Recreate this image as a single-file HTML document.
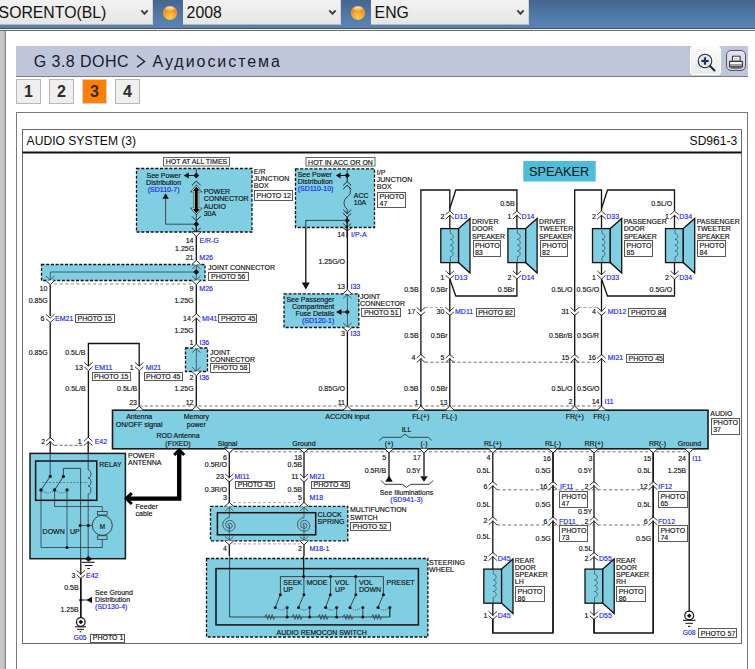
<!DOCTYPE html>
<html><head><meta charset="utf-8"><title>Audio System</title>
<style>
html,body{margin:0;padding:0;background:#fff;width:755px;height:669px;overflow:hidden;position:relative;font-family:"Liberation Sans",sans-serif;}
.topbar{position:absolute;left:0;top:0;width:755px;height:28px;background:linear-gradient(#45668f,#4f77a4 50%,#5681b1 80%,#5783b3);}
.l28{position:absolute;left:0;top:28px;width:755px;height:1px;background:#505050;}
.l29{position:absolute;left:0;top:29px;width:755px;height:1px;background:#f2f2f2;}
.l30{position:absolute;left:0;top:30px;width:755px;height:1px;background:#6c6c6c;}
.sel{position:absolute;top:-2px;height:27px;box-sizing:border-box;background:linear-gradient(#f3f3f3,#e6e6e6);border-right:1px solid #d6d2cc;border-bottom:1px solid #bdb6ae;font-size:15.8px;color:#111;line-height:26px;white-space:nowrap;overflow:hidden;}
.sel span{position:absolute;left:3.6px;top:2px;}
.chev{position:absolute;top:8px;width:9px;height:8px;}
.ball{position:absolute;top:5.5px;width:14px;height:14px;border-radius:50%;background:radial-gradient(circle at 50% 78%,#ffd060 0%,#f8a020 45%,#e07800 80%,#c86800 100%);box-shadow:inset 0 1px 0 rgba(255,240,200,.6);}
.ball:after{content:"";position:absolute;left:3px;top:1px;width:8px;height:4px;border-radius:50%;background:linear-gradient(rgba(255,255,255,.85),rgba(255,255,255,.1));}
.lbar{position:absolute;left:0;top:31px;width:5px;height:638px;background:linear-gradient(90deg,#cbcbd0,#c4c4c8 70%,#b0b0b4);}
.lbar2{position:absolute;left:5px;top:31px;width:1px;height:638px;background:#8a8a8a;}
.crumb{position:absolute;left:16px;top:46px;width:732px;height:31px;background:#c0c6da;border-bottom:1px solid #7c7c7c;box-sizing:border-box;}
.crumb .t{position:absolute;left:17.8px;top:6.5px;font-size:16px;color:#131c2e;letter-spacing:0.45px;white-space:nowrap;}
.crumb .t2{position:absolute;left:136.5px;top:6.5px;font-size:16px;color:#131c2e;letter-spacing:1.95px;white-space:nowrap;}
.zoom{position:absolute;left:690px;top:46px;width:31px;height:29px;box-sizing:border-box;border:1px solid #ffffff;border-radius:3px;background:linear-gradient(#fafafa,#ececec);}
.print{position:absolute;left:726px;top:50px;width:20px;height:21px;box-sizing:border-box;border:1.5px solid #555a66;border-radius:5px;background:linear-gradient(#e4e6ee,#c8ccd8);}
.btn{position:absolute;top:79px;width:25px;height:25px;box-sizing:border-box;border:1px solid #b8b8b8;background:#efefef;font-size:16px;font-weight:bold;color:#2b2b2b;text-align:center;line-height:24px;}
.btn.on{background:#ff7f00;border-color:#d0d0d0;}
svg.dg{position:absolute;left:0;top:0;}
svg.dg text{font-family:"Liberation Sans",sans-serif;}
</style></head>
<body>
<div class="topbar"></div>
<div class="l28"></div><div class="l29"></div><div class="l30"></div>
<div class="sel" style="left:-5px;width:158px"><span>SORENTO(BL)</span></div>
<svg class="chev" style="left:140px" width="9" height="8"><polyline points="1.3,2.4 4.5,5.8 7.7,2.4" fill="none" stroke="#444" stroke-width="2.0"/></svg>
<div class="ball" style="left:163px"></div>
<div class="sel" style="left:183px;width:158px"><span>2008</span></div>
<svg class="chev" style="left:328px" width="9" height="8"><polyline points="1.3,2.4 4.5,5.8 7.7,2.4" fill="none" stroke="#444" stroke-width="2.0"/></svg>
<div class="ball" style="left:351px"></div>
<div class="sel" style="left:371px;width:158px"><span>ENG</span></div>
<svg class="chev" style="left:516px" width="9" height="8"><polyline points="1.3,2.4 4.5,5.8 7.7,2.4" fill="none" stroke="#444" stroke-width="2.0"/></svg>
<div class="lbar"></div><div class="lbar2"></div>
<div class="crumb"><div class="t">G 3.8 DOHC</div><svg style="position:absolute;left:120px;top:9.3px" width="11" height="14"><polyline points="1,0.5 8.6,6.4 1,12.3" fill="none" stroke="#131c2e" stroke-width="1.3"/></svg><div class="t2">Аудиосистема</div></div>
<div class="zoom"><svg width="32" height="29" style="position:absolute;left:-1px;top:-1px">
<circle cx="15" cy="15" r="6.8" fill="#dce9f6" stroke="#2a2e2a" stroke-width="1.1"/>
<line x1="20" y1="20" x2="24.5" y2="24.5" stroke="#222" stroke-width="2.0" stroke-linecap="round"/>
<line x1="11.3" y1="15" x2="18.7" y2="15" stroke="#1f3552" stroke-width="2.2"/>
<line x1="15" y1="11.3" x2="15" y2="18.7" stroke="#1f3552" stroke-width="2.2"/>
</svg></div>
<div class="print"><svg width="20" height="21" style="position:absolute;left:-3px;top:-1.5px">
<rect x="8.5" y="6.2" width="7.6" height="6.4" fill="#f2f3f6" stroke="#333" stroke-width="1"/>
<line x1="10" y1="8.6" x2="14.5" y2="8.6" stroke="#999" stroke-width="0.6"/>
<line x1="10" y1="10.4" x2="14.5" y2="10.4" stroke="#999" stroke-width="0.6"/>
<path d="M5.6 12.2 q0,-0.8 0.8,-0.8 h11.2 q0.8,0 0.8,0.8 v4.6 h-12.8 z" fill="#f6f6f8" stroke="#333" stroke-width="1.1"/>
<line x1="6.2" y1="15" x2="17.8" y2="15" stroke="#333" stroke-width="0.9"/>
<line x1="6.6" y1="17.9" x2="17.4" y2="17.9" stroke="#333" stroke-width="1.1"/>
</svg></div>
<div class="btn" style="left:16px">1</div>
<div class="btn" style="left:49px">2</div>
<div class="btn on" style="left:82px">3</div>
<div class="btn" style="left:115px">4</div>

<svg class="dg" width="755" height="669" viewBox="0 0 755 669">
<rect x="16.5" y="112.5" width="731" height="600" fill="none" stroke="#7c7c7c" stroke-width="1"/>
<rect x="22.5" y="129.5" width="719" height="514" fill="none" stroke="#6a6a6a" stroke-width="1"/>
<text x="26.6" y="145.2" font-size="12.1" fill="#0c0c0c" >AUDIO SYSTEM (3)</text>
<text x="737.3" y="145.2" font-size="12.1" fill="#0c0c0c"  text-anchor="end">SD961-3</text>
<line x1="22.5" y1="152.6" x2="741.5" y2="152.6" stroke="#111" stroke-width="2.0"/>
<rect x="163.5" y="157.5" width="66" height="8.5" fill="#fff" stroke="#555" stroke-width="0.9"/>
<text x="196.5" y="164.4" font-size="7.0" fill="#111"  stroke="#111" stroke-width="0.15" text-anchor="middle">HOT AT ALL TIMES</text>
<rect x="136.5" y="168.5" width="115.5" height="63.5" fill="#80cee1" stroke="#111" stroke-width="1.3" stroke-dasharray="3 1.7"/>
<text x="163.6" y="177.9" font-size="7.0" fill="#111"  stroke="#111" stroke-width="0.15" text-anchor="middle">See Power</text>
<text x="163.6" y="184.9" font-size="7.0" fill="#111"  stroke="#111" stroke-width="0.15" text-anchor="middle">Distribution</text>
<text x="163.6" y="192.2" font-size="7.0" fill="#1a22ff"  stroke="#1a22ff" stroke-width="0.15" text-anchor="middle">(SD110-7)</text>
<line x1="196.3" y1="214" x2="196.3" y2="226" stroke="#222" stroke-width="0.8"/>
<line x1="196.3" y1="226" x2="196.3" y2="234" stroke="#111" stroke-width="1.3"/>
<polygon points="196.3,172.6 199.20000000000002,175.5 196.3,178.4 193.4,175.5" fill="#111" stroke="none" stroke-width="1"/>
<line x1="186" y1="175.5" x2="196.3" y2="175.5" stroke="#111" stroke-width="0.9"/>
<polygon points="183.6,175.5 188.8,172.4 188.8,178.6" fill="#111" stroke="none" stroke-width="1"/>
<polyline points="191.9,185.4 196.3,181 200.7,185.4" stroke="#111" stroke-width="0.9" fill="none"/>
<polygon points="196.3,186 192,191.2 194.4,191.2 194.4,208.6 192,208.6 196.3,213.8 200.6,208.6 198.2,208.6 198.2,191.2 200.6,191.2" fill="none" stroke="#333" stroke-width="1.9"/>
<polygon points="196.3,186 192,191.2 194.4,191.2 194.4,208.6 192,208.6 196.3,213.8 200.6,208.6 198.2,208.6 198.2,191.2 200.6,191.2" fill="#000" stroke="#f4f8fa" stroke-width="0.8"/>
<polyline points="191.9,216.4 196.3,220.8 200.7,216.4" stroke="#111" stroke-width="0.9" fill="none"/>
<polygon points="196.3,221.29999999999998 199.20000000000002,224.2 196.3,227.1 193.4,224.2" fill="#111" stroke="none" stroke-width="1"/>
<polyline points="196.3,224.2 165.6,224.2 165.6,196" stroke="#222" stroke-width="0.75" fill="none"/>
<polygon points="165.6,193.2 162.4,198.8 168.8,198.8" fill="#111" stroke="none" stroke-width="1"/>
<text x="203.7" y="194.3" font-size="7.0" fill="#111"  stroke="#111" stroke-width="0.15">POWER</text>
<text x="203.7" y="201.4" font-size="7.0" fill="#111"  stroke="#111" stroke-width="0.15">CONNECTOR</text>
<text x="203.7" y="208.5" font-size="7.0" fill="#111"  stroke="#111" stroke-width="0.15">AUDIO</text>
<text x="203.7" y="215.6" font-size="7.0" fill="#111"  stroke="#111" stroke-width="0.15">30A</text>
<line x1="196.3" y1="168.5" x2="196.3" y2="175.5" stroke="#333" stroke-width="0.9"/>
<text x="253.8" y="173.8" font-size="7.0" fill="#111"  stroke="#111" stroke-width="0.15">E/R</text>
<text x="253.8" y="180.8" font-size="7.0" fill="#111"  stroke="#111" stroke-width="0.15">JUNCTION</text>
<text x="253.8" y="187.8" font-size="7.0" fill="#111"  stroke="#111" stroke-width="0.15">BOX</text>
<rect x="254.5" y="190.5" width="38.0" height="10.0" fill="#fff" stroke="#5a5a5a" stroke-width="1.0"/>
<text x="256.5" y="198.3" font-size="7.0" fill="#111"  stroke="#111" stroke-width="0.15">PHOTO 12</text>
<polyline points="191.9,227.8 196.3,232.2 200.7,227.8" stroke="#111" stroke-width="0.8" fill="none"/>
<polyline points="191.6,231.8 196.3,236.5 201,231.8 191.6,231.8" stroke="#111" stroke-width="0.9" fill="#fff"/>
<text x="193.5" y="243.0" font-size="7.0" fill="#111"  stroke="#111" stroke-width="0.15" text-anchor="end">14</text>
<text x="199.5" y="243.0" font-size="7.0" fill="#1a22ff"  stroke="#1a22ff" stroke-width="0.15">E/R-G</text>
<text x="194.2" y="250.8" font-size="7.0" fill="#111"  stroke="#111" stroke-width="0.15" text-anchor="end">1.25G</text>
<text x="193.5" y="259.8" font-size="7.0" fill="#111"  stroke="#111" stroke-width="0.15" text-anchor="end">21</text>
<text x="199.3" y="259.8" font-size="7.0" fill="#1a22ff"  stroke="#1a22ff" stroke-width="0.15">M26</text>
<rect x="41.5" y="264.5" width="163.5" height="16" fill="#80cee1" stroke="#111" stroke-width="1.3" stroke-dasharray="3 1.7"/>
<line x1="196.3" y1="236" x2="196.3" y2="260.4" stroke="#111" stroke-width="1.3"/>
<line x1="50.3" y1="272" x2="196.3" y2="272" stroke="#2a4048" stroke-width="0.8"/>
<line x1="196.3" y1="264.5" x2="196.3" y2="280.5" stroke="#2a4048" stroke-width="0.75"/>
<polyline points="192.0,269.0 196.3,265.2 200.60000000000002,269.0" stroke="#333" stroke-width="0.7" fill="none"/>
<polyline points="192.0,276.0 196.3,279.8 200.60000000000002,276.0" stroke="#333" stroke-width="0.7" fill="none"/>
<line x1="50.3" y1="272" x2="50.3" y2="280.5" stroke="#2a4048" stroke-width="0.75"/>
<polyline points="46.0,276.0 50.3,279.8 54.599999999999994,276.0" stroke="#333" stroke-width="0.7" fill="none"/>
<polygon points="196.3,269.1 199.20000000000002,272 196.3,274.9 193.4,272" fill="#111" stroke="none" stroke-width="1"/>
<line x1="54" y1="284" x2="192" y2="284" stroke="#b0b0b0" stroke-width="1.3" stroke-dasharray="3 2.6"/>
<text x="208" y="269.9" font-size="7.0" fill="#111"  stroke="#111" stroke-width="0.15">JOINT CONNECTOR</text>
<rect x="208.5" y="272.5" width="40.0" height="8.0" fill="#fff" stroke="#5a5a5a" stroke-width="1.0"/>
<text x="211.0" y="279.3" font-size="7.0" fill="#111"  stroke="#111" stroke-width="0.15">PHOTO 56</text>
<text x="47.3" y="291.4" font-size="7.0" fill="#111"  stroke="#111" stroke-width="0.15" text-anchor="end">10</text>
<text x="193.5" y="291.4" font-size="7.0" fill="#111"  stroke="#111" stroke-width="0.15" text-anchor="end">9</text>
<text x="199.3" y="291.4" font-size="7.0" fill="#1a22ff"  stroke="#1a22ff" stroke-width="0.15">M26</text>
<line x1="50.2" y1="284.5" x2="50.2" y2="316" stroke="#111" stroke-width="1.3"/>
<line x1="196.3" y1="284.5" x2="196.3" y2="314" stroke="#111" stroke-width="1.3"/>
<text x="47.8" y="303.4" font-size="7.0" fill="#111"  stroke="#111" stroke-width="0.15" text-anchor="end">0.85G</text>
<text x="193.5" y="303.4" font-size="7.0" fill="#111"  stroke="#111" stroke-width="0.15" text-anchor="end">1.25G</text>
<text x="44.3" y="320.9" font-size="7.0" fill="#111"  stroke="#111" stroke-width="0.15" text-anchor="end">6</text>
<text x="55" y="320.9" font-size="7.0" fill="#1a22ff"  stroke="#1a22ff" stroke-width="0.15">EM21</text>
<rect x="75.5" y="314.5" width="39.0" height="8.0" fill="#fff" stroke="#5a5a5a" stroke-width="1.0"/>
<text x="77.5" y="320.8" font-size="7.0" fill="#111"  stroke="#111" stroke-width="0.15">PHOTO 15</text>
<text x="190.8" y="320.9" font-size="7.0" fill="#111"  stroke="#111" stroke-width="0.15" text-anchor="end">14</text>
<text x="201.9" y="320.9" font-size="7.0" fill="#1a22ff"  stroke="#1a22ff" stroke-width="0.15">MI41</text>
<rect x="218.5" y="314.5" width="38.0" height="8.0" fill="#fff" stroke="#5a5a5a" stroke-width="1.0"/>
<text x="221.0" y="320.8" font-size="7.0" fill="#111"  stroke="#111" stroke-width="0.15">PHOTO 45</text>
<line x1="50.2" y1="322.5" x2="50.2" y2="453.4" stroke="#111" stroke-width="1.3"/>
<line x1="196.3" y1="317.5" x2="196.3" y2="344" stroke="#111" stroke-width="1.3"/>
<text x="193.5" y="333.2" font-size="7.0" fill="#111"  stroke="#111" stroke-width="0.15" text-anchor="end">1.25G</text>
<text x="47.8" y="354.6" font-size="7.0" fill="#111"  stroke="#111" stroke-width="0.15" text-anchor="end">0.85G</text>
<text x="193.5" y="345.1" font-size="7.0" fill="#111"  stroke="#111" stroke-width="0.15" text-anchor="end">1</text>
<text x="199.5" y="345.1" font-size="7.0" fill="#1a22ff"  stroke="#1a22ff" stroke-width="0.15">I36</text>
<rect x="185.5" y="348" width="22" height="23.5" fill="#80cee1" stroke="#111" stroke-width="1.3" stroke-dasharray="3 1.7"/>
<line x1="196.3" y1="346" x2="196.3" y2="343.8" stroke="#111" stroke-width="1.3"/>
<line x1="196.3" y1="348.2" x2="196.3" y2="371.6" stroke="#2a4048" stroke-width="0.75"/>
<polyline points="192.0,352.7 196.3,348.9 200.60000000000002,352.7" stroke="#333" stroke-width="0.7" fill="none"/>
<polyline points="192.0,367.1 196.3,370.90000000000003 200.60000000000002,367.1" stroke="#333" stroke-width="0.7" fill="none"/>
<line x1="196.3" y1="375.7" x2="196.3" y2="410" stroke="#111" stroke-width="1.3"/>
<text x="210" y="354.6" font-size="7.0" fill="#111"  stroke="#111" stroke-width="0.15">JOINT</text>
<text x="210" y="361.8" font-size="7.0" fill="#111"  stroke="#111" stroke-width="0.15">CONNECTOR</text>
<rect x="210.5" y="363.5" width="39.0" height="9.0" fill="#fff" stroke="#5a5a5a" stroke-width="1.0"/>
<text x="213.0" y="370.3" font-size="7.0" fill="#111"  stroke="#111" stroke-width="0.15">PHOTO 58</text>
<text x="193.5" y="379.7" font-size="7.0" fill="#111"  stroke="#111" stroke-width="0.15" text-anchor="end">2</text>
<text x="199.5" y="379.7" font-size="7.0" fill="#1a22ff"  stroke="#1a22ff" stroke-width="0.15">I36</text>
<text x="193.6" y="391.4" font-size="7.0" fill="#111"  stroke="#111" stroke-width="0.15" text-anchor="end">1.25G</text>
<text x="193.5" y="404.9" font-size="7.0" fill="#111"  stroke="#111" stroke-width="0.15" text-anchor="end">12</text>
<polyline points="88.4,366 88.4,343.5 139.2,343.5 139.2,366" stroke="#111" stroke-width="1.3" fill="none"/>
<text x="85.5" y="354.6" font-size="7.0" fill="#111"  stroke="#111" stroke-width="0.15" text-anchor="end">0.5L/B</text>
<text x="82.9" y="369.6" font-size="7.0" fill="#111"  stroke="#111" stroke-width="0.15" text-anchor="end">13</text>
<text x="94.6" y="369.6" font-size="7.0" fill="#1a22ff"  stroke="#1a22ff" stroke-width="0.15">EM11</text>
<text x="133.7" y="369.6" font-size="7.0" fill="#111"  stroke="#111" stroke-width="0.15" text-anchor="end">1</text>
<text x="145.7" y="369.6" font-size="7.0" fill="#1a22ff"  stroke="#1a22ff" stroke-width="0.15">MI21</text>
<rect x="92.5" y="372.5" width="38.0" height="8.0" fill="#fff" stroke="#5a5a5a" stroke-width="1.0"/>
<text x="94.0" y="378.8" font-size="7.0" fill="#111"  stroke="#111" stroke-width="0.15">PHOTO 15</text>
<rect x="144.5" y="372.5" width="38.0" height="8.0" fill="#fff" stroke="#5a5a5a" stroke-width="1.0"/>
<text x="146.0" y="378.8" font-size="7.0" fill="#111"  stroke="#111" stroke-width="0.15">PHOTO 45</text>
<line x1="88.4" y1="370.5" x2="88.4" y2="438" stroke="#111" stroke-width="1.3"/>
<line x1="139.2" y1="370.5" x2="139.2" y2="410" stroke="#111" stroke-width="1.3"/>
<text x="85.6" y="391.4" font-size="7.0" fill="#111"  stroke="#111" stroke-width="0.15" text-anchor="end">0.5L/B</text>
<text x="137.3" y="391.4" font-size="7.0" fill="#111"  stroke="#111" stroke-width="0.15" text-anchor="end">0.5L/B</text>
<text x="137" y="404.9" font-size="7.0" fill="#111"  stroke="#111" stroke-width="0.15" text-anchor="end">23</text>
<line x1="139.2" y1="406" x2="601.5" y2="406" stroke="#606060" stroke-width="0.9" stroke-dasharray="3 2.4"/>
<rect x="112.5" y="410.2" width="595.5" height="38.6" fill="#80cee1" stroke="#1a1a1a" stroke-width="1.6"/>
<text x="139.2" y="419.3" font-size="7.0" fill="#111"  stroke="#111" stroke-width="0.15" text-anchor="middle">Antenna</text>
<text x="139.2" y="426.5" font-size="7.0" fill="#111"  stroke="#111" stroke-width="0.15" text-anchor="middle">ON/OFF signal</text>
<text x="196.3" y="419.3" font-size="7.0" fill="#111"  stroke="#111" stroke-width="0.15" text-anchor="middle">Memory</text>
<text x="196.3" y="426.5" font-size="7.0" fill="#111"  stroke="#111" stroke-width="0.15" text-anchor="middle">power</text>
<text x="178" y="438.4" font-size="7.0" fill="#111"  stroke="#111" stroke-width="0.15" text-anchor="middle">ROD Antenna</text>
<text x="178" y="446.3" font-size="7.0" fill="#111"  stroke="#111" stroke-width="0.15" text-anchor="middle">(FIXED)</text>
<text x="347.4" y="419.3" font-size="7.0" fill="#111"  stroke="#111" stroke-width="0.15" text-anchor="middle">ACC/ON input</text>
<text x="420.8" y="419.3" font-size="7.0" fill="#111"  stroke="#111" stroke-width="0.15" text-anchor="middle">FL(+)</text>
<text x="449.4" y="419.3" font-size="7.0" fill="#111"  stroke="#111" stroke-width="0.15" text-anchor="middle">FL(-)</text>
<text x="574.7" y="419.3" font-size="7.0" fill="#111"  stroke="#111" stroke-width="0.15" text-anchor="middle">FR(+)</text>
<text x="601.5" y="419.3" font-size="7.0" fill="#111"  stroke="#111" stroke-width="0.15" text-anchor="middle">FR(-)</text>
<text x="406.5" y="432.4" font-size="7.0" fill="#111"  stroke="#111" stroke-width="0.15" text-anchor="middle">ILL</text>
<polyline points="379.2,440.6 382.6,437.3 400.8,437.3 404.9,434.2 409.3,437.3 428.5,437.3 431.8,440.6" stroke="#222" stroke-width="0.8" fill="none"/>
<text x="227.6" y="445.5" font-size="7.0" fill="#111"  stroke="#111" stroke-width="0.15" text-anchor="middle">Signal</text>
<text x="304" y="445.5" font-size="7.0" fill="#111"  stroke="#111" stroke-width="0.15" text-anchor="middle">Ground</text>
<text x="389" y="445.5" font-size="7.0" fill="#111"  stroke="#111" stroke-width="0.15" text-anchor="middle">(+)</text>
<text x="424" y="445.5" font-size="7.0" fill="#111"  stroke="#111" stroke-width="0.15" text-anchor="middle">(-)</text>
<text x="492.8" y="445.5" font-size="7.0" fill="#111"  stroke="#111" stroke-width="0.15" text-anchor="middle">RL(+)</text>
<text x="553" y="445.5" font-size="7.0" fill="#111"  stroke="#111" stroke-width="0.15" text-anchor="middle">RL(-)</text>
<text x="594" y="445.5" font-size="7.0" fill="#111"  stroke="#111" stroke-width="0.15" text-anchor="middle">RR(+)</text>
<text x="657.5" y="445.5" font-size="7.0" fill="#111"  stroke="#111" stroke-width="0.15" text-anchor="middle">RR(-)</text>
<text x="689.4" y="445.5" font-size="7.0" fill="#111"  stroke="#111" stroke-width="0.15" text-anchor="middle">Ground</text>
<line x1="229.3" y1="451.8" x2="689.2" y2="451.8" stroke="#606060" stroke-width="0.9" stroke-dasharray="3 2.4"/>
<text x="710.3" y="416.0" font-size="7.0" fill="#111"  stroke="#111" stroke-width="0.15">AUDIO</text>
<rect x="711.5" y="418.5" width="28.0" height="16.0" fill="#fff" stroke="#5a5a5a" stroke-width="1.0"/>
<text x="713.2" y="425.2" font-size="7.0" fill="#111"  stroke="#111" stroke-width="0.15">PHOTO</text>
<text x="713.2" y="432.4" font-size="7.0" fill="#111"  stroke="#111" stroke-width="0.15">37</text>
<text x="345" y="391.4" font-size="7.0" fill="#111"  stroke="#111" stroke-width="0.15" text-anchor="end">0.85G/O</text>
<text x="345" y="404.9" font-size="7.0" fill="#111"  stroke="#111" stroke-width="0.15" text-anchor="end">11</text>
<text x="45.2" y="444.1" font-size="7.0" fill="#111"  stroke="#111" stroke-width="0.15" text-anchor="end">2</text>
<text x="81.7" y="444.1" font-size="7.0" fill="#111"  stroke="#111" stroke-width="0.15" text-anchor="end">1</text>
<text x="94.7" y="444.1" font-size="7.0" fill="#1a22ff"  stroke="#1a22ff" stroke-width="0.15">E42</text>
<line x1="88.2" y1="440.8" x2="88.2" y2="453.4" stroke="#111" stroke-width="1.3"/>
<line x1="54.5" y1="445.3" x2="84" y2="445.3" stroke="#555" stroke-width="0.9" stroke-dasharray="3 2"/>
<rect x="30" y="453.4" width="95.4" height="105.3" fill="#80cee1" stroke="#1a1a1a" stroke-width="1.5"/>
<rect x="35.6" y="461" width="61.2" height="39.3" fill="none" stroke="#111" stroke-width="1.5"/>
<text x="99.2" y="466.7" font-size="7.0" fill="#111"  stroke="#111" stroke-width="0.15">RELAY</text>
<text x="128" y="457.9" font-size="7.0" fill="#111"  stroke="#111" stroke-width="0.15">POWER</text>
<text x="128" y="465.0" font-size="7.0" fill="#111"  stroke="#111" stroke-width="0.15">ANTENNA</text>
<line x1="50.2" y1="453.4" x2="50.2" y2="476.4" stroke="#222" stroke-width="0.75"/>
<circle cx="50.2" cy="476.4" r="1.6" fill="#111"/>
<circle cx="63.4" cy="476.4" r="1.6" fill="#111"/>
<line x1="50.2" y1="476.4" x2="41" y2="490" stroke="#222" stroke-width="0.8"/>
<line x1="63.4" y1="476.4" x2="54.6" y2="490" stroke="#222" stroke-width="0.8"/>
<circle cx="41" cy="490" r="1.7" fill="#111"/>
<circle cx="54.6" cy="490" r="1.7" fill="#111"/>
<circle cx="67" cy="490" r="1.7" fill="#111"/>
<line x1="42" y1="482.5" x2="88" y2="482.5" stroke="#444" stroke-width="0.6" stroke-dasharray="2 1.5"/>
<path d="M43,491 q5,4 10,0 M56.5,491 q5,4 10,0" fill="none" stroke="#333" stroke-width="0.6" stroke-dasharray="1.5 1"/>
<polyline points="63.4,476.4 63.4,468.4 80.6,468.4 80.6,559" stroke="#222" stroke-width="0.75" fill="none"/>
<line x1="80.8" y1="559" x2="80.8" y2="624" stroke="#111" stroke-width="1.3"/>
<line x1="88.2" y1="453.4" x2="88.2" y2="470" stroke="#222" stroke-width="0.75"/>
<path d="M88.2,470 c3.6,0 3.6,8 0,8 c3.6,0 3.6,8 0,8 c3.6,0 3.6,8 0,8 L88.2,559" fill="none" stroke="#222" stroke-width="0.7"/>
<polyline points="41,490 41,547.5 102.3,547.5 102.3,536" stroke="#222" stroke-width="0.7" fill="none"/>
<polyline points="54.6,490 54.6,506.5 102.3,506.5 102.3,515" stroke="#222" stroke-width="0.7" fill="none"/>
<polyline points="67,490 67,547.5" stroke="#222" stroke-width="0.7" fill="none"/>
<circle cx="67" cy="547.5" r="1.5" fill="#111"/>
<circle cx="102.3" cy="525.4" r="10" fill="none" stroke="#222" stroke-width="0.8"/>
<rect x="97.5" y="511.5" width="9.6" height="3.5" fill="#80cee1" stroke="#222" stroke-width="0.7"/>
<rect x="97.5" y="535.8" width="9.6" height="3.5" fill="#80cee1" stroke="#222" stroke-width="0.7"/>
<text x="102.3" y="528.9" font-size="6.4" fill="#111"  stroke="#111" stroke-width="0.15" text-anchor="middle">M</text>
<line x1="80.1" y1="525.4" x2="92.3" y2="525.4" stroke="#222" stroke-width="0.7"/>
<circle cx="80.1" cy="525.4" r="1.5" fill="#111"/>
<circle cx="88.4" cy="525.4" r="1.5" fill="#111"/>
<text x="42.6" y="534.4" font-size="7.0" fill="#111"  stroke="#111" stroke-width="0.15">DOWN</text>
<text x="70" y="534.4" font-size="7.0" fill="#111"  stroke="#111" stroke-width="0.15">UP</text>
<polygon points="88.5,555.8 92,558.9 88.5,561.8 85,558.9" fill="#111" stroke="none" stroke-width="1"/>
<line x1="82" y1="562.3" x2="94.5" y2="562.3" stroke="#111" stroke-width="1.1"/>
<line x1="85" y1="565.5" x2="92.3" y2="565.5" stroke="#111" stroke-width="1.0"/>
<line x1="87.4" y1="568.6" x2="89.8" y2="568.6" stroke="#111" stroke-width="1.0"/>
<polyline points="179.2,451 179.2,498.6 127,498.6" stroke="#000" stroke-width="4.4" fill="none" stroke-linejoin="miter"/>
<polyline points="131.8,493.2 126.2,498.6 131.8,504" stroke="#000" stroke-width="3.0" fill="none" stroke-linejoin="miter" stroke-miterlimit="6"/>
<polyline points="174.2,455 179.2,449.8 184.2,455" stroke="#000" stroke-width="3.0" fill="none" stroke-linejoin="miter" stroke-miterlimit="6"/>
<text x="135.6" y="508.9" font-size="7.0" fill="#111"  stroke="#111" stroke-width="0.15">Feeder</text>
<text x="135.6" y="516.0" font-size="7.0" fill="#111"  stroke="#111" stroke-width="0.15">cable</text>
<text x="75.3" y="578.1" font-size="7.0" fill="#111"  stroke="#111" stroke-width="0.15" text-anchor="end">3</text>
<text x="86" y="578.1" font-size="7.0" fill="#1a22ff"  stroke="#1a22ff" stroke-width="0.15">E42</text>
<line x1="80.8" y1="578.5" x2="80.8" y2="618" stroke="#111" stroke-width="1.3"/>
<text x="78.6" y="589.8" font-size="7.0" fill="#111"  stroke="#111" stroke-width="0.15" text-anchor="end">0.5B</text>
<circle cx="80.8" cy="600" r="1.6" fill="#111"/>
<line x1="80.8" y1="600" x2="90" y2="600" stroke="#111" stroke-width="0.9"/>
<polygon points="86.5,600 92,596.8 92,603.2" fill="#111" stroke="none" stroke-width="1"/>
<text x="95.1" y="595.4" font-size="7.0" fill="#111"  stroke="#111" stroke-width="0.15">See Ground</text>
<text x="95.1" y="602.3" font-size="7.0" fill="#111"  stroke="#111" stroke-width="0.15">Distribution</text>
<text x="95.1" y="609.2" font-size="7.0" fill="#1a22ff"  stroke="#1a22ff" stroke-width="0.15">(SD130-4)</text>
<text x="78.8" y="612.2" font-size="7.0" fill="#111"  stroke="#111" stroke-width="0.15" text-anchor="end">1.25B</text>
<circle cx="80.8" cy="622" r="4.3" fill="#fff" stroke="#111" stroke-width="1.2"/>
<polygon points="80.8,619.7 83.1,622 80.8,624.3 78.5,622" fill="#111" stroke="none" stroke-width="1"/>
<line x1="75" y1="626.8" x2="86" y2="626.8" stroke="#111" stroke-width="1.1"/>
<line x1="77" y1="629.3" x2="84" y2="629.3" stroke="#111" stroke-width="1.0"/>
<line x1="79.6" y1="631.8" x2="81.4" y2="631.8" stroke="#111" stroke-width="1.0"/>
<text x="73.6" y="639.6" font-size="6.8" fill="#1a22ff"  stroke="#1a22ff" stroke-width="0.15">G05</text>
<rect x="90.5" y="634.5" width="34.0" height="8.0" fill="#fff" stroke="#5a5a5a" stroke-width="1.0"/>
<text x="92.8" y="640.3" font-size="7.0" fill="#111"  stroke="#111" stroke-width="0.15">PHOTO 1</text>
<rect x="306" y="157.5" width="69" height="8.5" fill="#fff" stroke="#555" stroke-width="0.9"/>
<text x="340.5" y="164.5" font-size="7.0" fill="#111"  stroke="#111" stroke-width="0.15" text-anchor="middle">HOT IN ACC OR ON</text>
<rect x="295.5" y="168.8" width="79" height="58.7" fill="#80cee1" stroke="#111" stroke-width="1.3" stroke-dasharray="3 1.7"/>
<line x1="347.2" y1="169.2" x2="347.2" y2="175.5" stroke="#333" stroke-width="0.9"/>
<text x="297.7" y="176.9" font-size="7.0" fill="#111"  stroke="#111" stroke-width="0.15">See Power</text>
<text x="297.7" y="183.8" font-size="7.0" fill="#111"  stroke="#111" stroke-width="0.15">Distribution</text>
<text x="297.7" y="191.0" font-size="7.0" fill="#1a22ff"  stroke="#1a22ff" stroke-width="0.15">(SD110-10)</text>
<line x1="347.2" y1="175.5" x2="347.2" y2="181.5" stroke="#111" stroke-width="1.0"/>
<polygon points="347.2,172.8 349.9,175.5 347.2,178.2 344.5,175.5" fill="#111" stroke="none" stroke-width="1"/>
<line x1="338" y1="175.5" x2="347.2" y2="175.5" stroke="#111" stroke-width="1.0"/>
<polygon points="335.9,175.5 340.6,172.6 340.6,178.4" fill="#111" stroke="none" stroke-width="1"/>
<polyline points="343.2,185.4 347.2,181.6 351.2,185.4" stroke="#111" stroke-width="0.9" fill="none"/>
<polyline points="343.2,189 347.2,185.2 351.2,189" stroke="#111" stroke-width="0.9" fill="none"/>
<path d="M347.2,185.5 C351.5,188 351.5,194.5 347.2,197 C343,199.5 343,206.5 347.2,209 L347.2,214" fill="none" stroke="#222" stroke-width="0.8"/>
<polyline points="343.2,209.7 347.2,213.5 351.2,209.7" stroke="#111" stroke-width="0.9" fill="none"/>
<polyline points="343.2,213.3 347.2,217.1 351.2,213.3" stroke="#111" stroke-width="0.9" fill="none"/>
<text x="353.8" y="197.8" font-size="7.0" fill="#111"  stroke="#111" stroke-width="0.15">ACC</text>
<text x="353.8" y="204.9" font-size="7.0" fill="#111"  stroke="#111" stroke-width="0.15">10A</text>
<line x1="347.2" y1="217" x2="347.2" y2="238" stroke="#111" stroke-width="1.3"/>
<polygon points="347.2,217.70000000000002 349.9,220.4 347.2,223.1 344.5,220.4" fill="#111" stroke="none" stroke-width="1"/>
<line x1="305.8" y1="220.4" x2="347.2" y2="220.4" stroke="#222" stroke-width="0.8"/>
<line x1="305.8" y1="220" x2="305.8" y2="227.5" stroke="#222" stroke-width="0.8"/>
<line x1="305.8" y1="227.5" x2="305.8" y2="284" stroke="#111" stroke-width="1.3"/>
<polygon points="305.8,289.5 301.8,282.5 309.8,282.5" fill="#111" stroke="none" stroke-width="1"/>
<polyline points="343.2,223.5 347.2,227.2 351.2,223.5" stroke="#111" stroke-width="0.8" fill="none"/>
<polyline points="342.5,227.5 347.2,230.8 351.9,227.5" stroke="#111" stroke-width="0.9" fill="none"/>
<text x="376.8" y="174.7" font-size="7.0" fill="#111"  stroke="#111" stroke-width="0.15">I/P</text>
<text x="376.8" y="181.7" font-size="7.0" fill="#111"  stroke="#111" stroke-width="0.15">JUNCTION</text>
<text x="376.8" y="188.7" font-size="7.0" fill="#111"  stroke="#111" stroke-width="0.15">BOX</text>
<rect x="377.5" y="192.5" width="28.0" height="15.0" fill="#fff" stroke="#5a5a5a" stroke-width="1.0"/>
<text x="379.5" y="198.9" font-size="7.0" fill="#111"  stroke="#111" stroke-width="0.15">PHOTO</text>
<text x="379.5" y="206.1" font-size="7.0" fill="#111"  stroke="#111" stroke-width="0.15">47</text>
<text x="345" y="236.5" font-size="7.0" fill="#111"  stroke="#111" stroke-width="0.15" text-anchor="end">14</text>
<text x="351" y="236.5" font-size="7.0" fill="#1a22ff"  stroke="#1a22ff" stroke-width="0.15">I/P-A</text>
<line x1="347.4" y1="228" x2="347.4" y2="289.7" stroke="#111" stroke-width="1.3"/>
<line x1="347.4" y1="331.6" x2="347.4" y2="410" stroke="#111" stroke-width="1.3"/>
<text x="345" y="264.0" font-size="7.0" fill="#111"  stroke="#111" stroke-width="0.15" text-anchor="end">1.25G/O</text>
<text x="345" y="289.0" font-size="7.0" fill="#111"  stroke="#111" stroke-width="0.15" text-anchor="end">13</text>
<text x="350.5" y="289.0" font-size="7.0" fill="#1a22ff"  stroke="#1a22ff" stroke-width="0.15">I33</text>
<rect x="284" y="293.8" width="74.8" height="33.7" fill="#80cee1" stroke="#111" stroke-width="1.3" stroke-dasharray="3 1.7"/>
<line x1="347.4" y1="293.8" x2="347.4" y2="327.5" stroke="#2a4048" stroke-width="0.75"/>
<polyline points="343.09999999999997,298.3 347.4,294.5 351.7,298.3" stroke="#333" stroke-width="0.7" fill="none"/>
<polyline points="343.09999999999997,323.0 347.4,326.8 351.7,323.0" stroke="#333" stroke-width="0.7" fill="none"/>
<text x="334.3" y="301.7" font-size="7.0" fill="#111"  stroke="#111" stroke-width="0.15" text-anchor="end">See Passenger</text>
<text x="334.3" y="308.7" font-size="7.0" fill="#111"  stroke="#111" stroke-width="0.15" text-anchor="end">Compartment</text>
<text x="334.3" y="315.7" font-size="7.0" fill="#111"  stroke="#111" stroke-width="0.15" text-anchor="end">Fuse Details</text>
<text x="334.3" y="322.7" font-size="7.0" fill="#1a22ff"  stroke="#1a22ff" stroke-width="0.15" text-anchor="end">(SD120-1)</text>
<polygon points="347.4,309.4 350.0,312 347.4,314.6 344.79999999999995,312" fill="#111" stroke="none" stroke-width="1"/>
<line x1="340" y1="312" x2="347.4" y2="312" stroke="#111" stroke-width="1.0"/>
<polygon points="336,312 341.5,309.1 341.5,314.9" fill="#111" stroke="none" stroke-width="1"/>
<text x="345" y="335.5" font-size="7.0" fill="#111"  stroke="#111" stroke-width="0.15" text-anchor="end">3</text>
<text x="350.5" y="335.5" font-size="7.0" fill="#1a22ff"  stroke="#1a22ff" stroke-width="0.15">I33</text>
<text x="360" y="299.3" font-size="7.0" fill="#111"  stroke="#111" stroke-width="0.15">JOINT</text>
<text x="360" y="306.1" font-size="7.0" fill="#111"  stroke="#111" stroke-width="0.15">CONNECTOR</text>
<rect x="361.5" y="308.5" width="39.0" height="8.0" fill="#fff" stroke="#5a5a5a" stroke-width="1.0"/>
<text x="363.9" y="315.1" font-size="7.0" fill="#111"  stroke="#111" stroke-width="0.15">PHOTO 51</text>
<rect x="523.3" y="161" width="72.4" height="20.5" fill="#4dbddb" stroke="none" stroke-width="0"/>
<text x="528.9" y="176.0" font-size="13.6" fill="#111"  textLength="60.4" lengthAdjust="spacingAndGlyphs">SPEAKER</text>
<polyline points="420.9,410 420.9,190 449.8,190 449.8,211" stroke="#111" stroke-width="1.3" fill="none"/>
<polyline points="516.9,211 516.9,190 455.8,190 449.8,208.5" stroke="#111" stroke-width="1.3" fill="none"/>
<rect x="440.8" y="228.6" width="17.80000000000001" height="34.00000000000003" fill="#80cee1" stroke="#111" stroke-width="1.3"/>
<polygon points="458.6,228.6 470.0,218.4 470.0,273.0 458.6,262.6" fill="#80cee1" stroke="#111" stroke-width="1.3"/>
<path d="M450.3,228.6 L450.3,233.6 c3.8,0.3 3.8,5.5 0,5.8 c3.8,0.3 3.8,5.5 0,5.8 c3.8,0.3 3.8,5.5 0,5.8 c3.8,0.3 3.8,5.5 0,5.8 L450.3,262.6" fill="none" stroke="#3a4a50" stroke-width="0.7"/>
<rect x="507.9" y="228.6" width="17.799999999999955" height="34.00000000000003" fill="#80cee1" stroke="#111" stroke-width="1.3"/>
<polygon points="525.6999999999999,228.6 537.1,218.4 537.1,273.0 525.6999999999999,262.6" fill="#80cee1" stroke="#111" stroke-width="1.3"/>
<path d="M517.4,228.6 L517.4,233.6 c3.8,0.3 3.8,5.5 0,5.8 c3.8,0.3 3.8,5.5 0,5.8 c3.8,0.3 3.8,5.5 0,5.8 c3.8,0.3 3.8,5.5 0,5.8 L517.4,262.6" fill="none" stroke="#3a4a50" stroke-width="0.7"/>
<line x1="449.8" y1="214.6" x2="449.8" y2="228.6" stroke="#111" stroke-width="1.3"/>
<line x1="516.9" y1="214.6" x2="516.9" y2="228.6" stroke="#111" stroke-width="1.3"/>
<line x1="449.8" y1="262.6" x2="449.8" y2="275" stroke="#111" stroke-width="1.3"/>
<line x1="516.9" y1="262.6" x2="516.9" y2="275" stroke="#111" stroke-width="1.3"/>
<polyline points="449.8,279 455.8,296 516.9,296 516.9,279" stroke="#111" stroke-width="1.3" fill="none"/>
<line x1="449.8" y1="279" x2="449.8" y2="410" stroke="#111" stroke-width="1.3"/>
<text x="444.3" y="218.7" font-size="7.0" fill="#111"  stroke="#111" stroke-width="0.15" text-anchor="end">2</text>
<text x="454.5" y="218.7" font-size="7.0" fill="#1a22ff"  stroke="#1a22ff" stroke-width="0.15">D13</text>
<text x="511.4" y="218.7" font-size="7.0" fill="#111"  stroke="#111" stroke-width="0.15" text-anchor="end">1</text>
<text x="521.6" y="218.7" font-size="7.0" fill="#1a22ff"  stroke="#1a22ff" stroke-width="0.15">D14</text>
<text x="444.3" y="279.9" font-size="7.0" fill="#111"  stroke="#111" stroke-width="0.15" text-anchor="end">1</text>
<text x="454.5" y="279.9" font-size="7.0" fill="#1a22ff"  stroke="#1a22ff" stroke-width="0.15">D13</text>
<text x="511.4" y="279.9" font-size="7.0" fill="#111"  stroke="#111" stroke-width="0.15" text-anchor="end">2</text>
<text x="521.6" y="279.9" font-size="7.0" fill="#1a22ff"  stroke="#1a22ff" stroke-width="0.15">D14</text>
<text x="472.0" y="224.1" font-size="7.0" fill="#111"  stroke="#111" stroke-width="0.15">DRIVER</text>
<text x="472.0" y="231.3" font-size="7.0" fill="#111"  stroke="#111" stroke-width="0.15">DOOR</text>
<text x="472.0" y="238.5" font-size="7.0" fill="#111"  stroke="#111" stroke-width="0.15">SPEAKER</text>
<text x="539.1" y="224.1" font-size="7.0" fill="#111"  stroke="#111" stroke-width="0.15">DRIVER</text>
<text x="539.1" y="231.3" font-size="7.0" fill="#111"  stroke="#111" stroke-width="0.15">TWEETER</text>
<text x="539.1" y="238.5" font-size="7.0" fill="#111"  stroke="#111" stroke-width="0.15">SPEAKER</text>
<rect x="473.5" y="240.5" width="27.0" height="16.0" fill="#fff" stroke="#5a5a5a" stroke-width="1.0"/>
<text x="474.9" y="247.5" font-size="7.0" fill="#111"  stroke="#111" stroke-width="0.15">PHOTO</text>
<text x="474.9" y="254.7" font-size="7.0" fill="#111"  stroke="#111" stroke-width="0.15">83</text>
<rect x="540.5" y="240.5" width="27.0" height="16.0" fill="#fff" stroke="#5a5a5a" stroke-width="1.0"/>
<text x="542.0" y="247.5" font-size="7.0" fill="#111"  stroke="#111" stroke-width="0.15">PHOTO</text>
<text x="542.0" y="254.7" font-size="7.0" fill="#111"  stroke="#111" stroke-width="0.15">82</text>
<text x="514.6" y="205.9" font-size="7.0" fill="#111"  stroke="#111" stroke-width="0.15" text-anchor="end">0.5B</text>
<text x="514.6" y="292.1" font-size="7.0" fill="#111"  stroke="#111" stroke-width="0.15" text-anchor="end">0.5Br</text>
<polyline points="574.7,410 574.7,190 601.5,190 601.5,211" stroke="#111" stroke-width="1.3" fill="none"/>
<polyline points="674.5,211 674.5,190 607.5,190 601.5,208.5" stroke="#111" stroke-width="1.3" fill="none"/>
<rect x="592.5" y="228.6" width="17.799999999999955" height="34.00000000000003" fill="#80cee1" stroke="#111" stroke-width="1.3"/>
<polygon points="610.3,228.6 621.7,218.4 621.7,273.0 610.3,262.6" fill="#80cee1" stroke="#111" stroke-width="1.3"/>
<path d="M602.0,228.6 L602.0,233.6 c3.8,0.3 3.8,5.5 0,5.8 c3.8,0.3 3.8,5.5 0,5.8 c3.8,0.3 3.8,5.5 0,5.8 c3.8,0.3 3.8,5.5 0,5.8 L602.0,262.6" fill="none" stroke="#3a4a50" stroke-width="0.7"/>
<rect x="665.5" y="228.6" width="17.799999999999955" height="34.00000000000003" fill="#80cee1" stroke="#111" stroke-width="1.3"/>
<polygon points="683.3,228.6 694.7,218.4 694.7,273.0 683.3,262.6" fill="#80cee1" stroke="#111" stroke-width="1.3"/>
<path d="M675.0,228.6 L675.0,233.6 c3.8,0.3 3.8,5.5 0,5.8 c3.8,0.3 3.8,5.5 0,5.8 c3.8,0.3 3.8,5.5 0,5.8 c3.8,0.3 3.8,5.5 0,5.8 L675.0,262.6" fill="none" stroke="#3a4a50" stroke-width="0.7"/>
<line x1="601.5" y1="214.6" x2="601.5" y2="228.6" stroke="#111" stroke-width="1.3"/>
<line x1="674.5" y1="214.6" x2="674.5" y2="228.6" stroke="#111" stroke-width="1.3"/>
<line x1="601.5" y1="262.6" x2="601.5" y2="275" stroke="#111" stroke-width="1.3"/>
<line x1="674.5" y1="262.6" x2="674.5" y2="275" stroke="#111" stroke-width="1.3"/>
<polyline points="601.5,279 607.5,296 674.5,296 674.5,279" stroke="#111" stroke-width="1.3" fill="none"/>
<line x1="601.5" y1="279" x2="601.5" y2="410" stroke="#111" stroke-width="1.3"/>
<text x="596.0" y="218.7" font-size="7.0" fill="#111"  stroke="#111" stroke-width="0.15" text-anchor="end">2</text>
<text x="606.2" y="218.7" font-size="7.0" fill="#1a22ff"  stroke="#1a22ff" stroke-width="0.15">D33</text>
<text x="669.0" y="218.7" font-size="7.0" fill="#111"  stroke="#111" stroke-width="0.15" text-anchor="end">1</text>
<text x="679.2" y="218.7" font-size="7.0" fill="#1a22ff"  stroke="#1a22ff" stroke-width="0.15">D34</text>
<text x="596.0" y="279.9" font-size="7.0" fill="#111"  stroke="#111" stroke-width="0.15" text-anchor="end">1</text>
<text x="606.2" y="279.9" font-size="7.0" fill="#1a22ff"  stroke="#1a22ff" stroke-width="0.15">D33</text>
<text x="669.0" y="279.9" font-size="7.0" fill="#111"  stroke="#111" stroke-width="0.15" text-anchor="end">2</text>
<text x="679.2" y="279.9" font-size="7.0" fill="#1a22ff"  stroke="#1a22ff" stroke-width="0.15">D34</text>
<text x="623.7" y="224.1" font-size="7.0" fill="#111"  stroke="#111" stroke-width="0.15">PASSENGER</text>
<text x="623.7" y="231.3" font-size="7.0" fill="#111"  stroke="#111" stroke-width="0.15">DOOR</text>
<text x="623.7" y="238.5" font-size="7.0" fill="#111"  stroke="#111" stroke-width="0.15">SPEAKER</text>
<text x="696.7" y="224.1" font-size="7.0" fill="#111"  stroke="#111" stroke-width="0.15">PASSENGER</text>
<text x="696.7" y="231.3" font-size="7.0" fill="#111"  stroke="#111" stroke-width="0.15">TWEETER</text>
<text x="696.7" y="238.5" font-size="7.0" fill="#111"  stroke="#111" stroke-width="0.15">SPEAKER</text>
<rect x="624.5" y="240.5" width="28.0" height="16.0" fill="#fff" stroke="#5a5a5a" stroke-width="1.0"/>
<text x="626.6" y="247.5" font-size="7.0" fill="#111"  stroke="#111" stroke-width="0.15">PHOTO</text>
<text x="626.6" y="254.7" font-size="7.0" fill="#111"  stroke="#111" stroke-width="0.15">85</text>
<rect x="697.5" y="240.5" width="28.0" height="16.0" fill="#fff" stroke="#5a5a5a" stroke-width="1.0"/>
<text x="699.6" y="247.5" font-size="7.0" fill="#111"  stroke="#111" stroke-width="0.15">PHOTO</text>
<text x="699.6" y="254.7" font-size="7.0" fill="#111"  stroke="#111" stroke-width="0.15">84</text>
<text x="672.2" y="205.9" font-size="7.0" fill="#111"  stroke="#111" stroke-width="0.15" text-anchor="end">0.5L/O</text>
<text x="672.2" y="292.1" font-size="7.0" fill="#111"  stroke="#111" stroke-width="0.15" text-anchor="end">0.5G/O</text>
<text x="418.59999999999997" y="292.2" font-size="7.0" fill="#111"  stroke="#111" stroke-width="0.15" text-anchor="end">0.5B</text>
<text x="447.5" y="292.2" font-size="7.0" fill="#111"  stroke="#111" stroke-width="0.15" text-anchor="end">0.5Br</text>
<text x="415.4" y="314.3" font-size="7.0" fill="#111"  stroke="#111" stroke-width="0.15" text-anchor="end">17</text>
<text x="444.3" y="314.3" font-size="7.0" fill="#111"  stroke="#111" stroke-width="0.15" text-anchor="end">30</text>
<line x1="424.9" y1="307.5" x2="445.8" y2="307.5" stroke="#a8a8a8" stroke-width="1.0" stroke-dasharray="3 2"/>
<text x="418.59999999999997" y="337.5" font-size="7.0" fill="#111"  stroke="#111" stroke-width="0.15" text-anchor="end">0.5B</text>
<text x="447.5" y="337.5" font-size="7.0" fill="#111"  stroke="#111" stroke-width="0.15" text-anchor="end">0.5Br</text>
<text x="415.4" y="360.1" font-size="7.0" fill="#111"  stroke="#111" stroke-width="0.15" text-anchor="end">4</text>
<text x="444.3" y="360.1" font-size="7.0" fill="#111"  stroke="#111" stroke-width="0.15" text-anchor="end">5</text>
<text x="572.4000000000001" y="292.2" font-size="7.0" fill="#111"  stroke="#111" stroke-width="0.15" text-anchor="end">0.5L/O</text>
<text x="599.2" y="292.2" font-size="7.0" fill="#111"  stroke="#111" stroke-width="0.15" text-anchor="end">0.5G/O</text>
<text x="569.2" y="314.3" font-size="7.0" fill="#111"  stroke="#111" stroke-width="0.15" text-anchor="end">31</text>
<text x="596.0" y="314.3" font-size="7.0" fill="#111"  stroke="#111" stroke-width="0.15" text-anchor="end">4</text>
<line x1="578.7" y1="307.5" x2="597.5" y2="307.5" stroke="#a8a8a8" stroke-width="1.0" stroke-dasharray="3 2"/>
<text x="572.4000000000001" y="337.5" font-size="7.0" fill="#111"  stroke="#111" stroke-width="0.15" text-anchor="end">0.5Br/B</text>
<text x="599.2" y="337.5" font-size="7.0" fill="#111"  stroke="#111" stroke-width="0.15" text-anchor="end">0.5G/R</text>
<text x="569.2" y="360.1" font-size="7.0" fill="#111"  stroke="#111" stroke-width="0.15" text-anchor="end">15</text>
<text x="596.0" y="360.1" font-size="7.0" fill="#111"  stroke="#111" stroke-width="0.15" text-anchor="end">16</text>
<text x="455" y="314.3" font-size="7.0" fill="#1a22ff"  stroke="#1a22ff" stroke-width="0.15">MD11</text>
<rect x="476.5" y="308.5" width="38.0" height="8.0" fill="#fff" stroke="#5a5a5a" stroke-width="1.0"/>
<text x="478.2" y="314.8" font-size="7.0" fill="#111"  stroke="#111" stroke-width="0.15">PHOTO 82</text>
<text x="607.7" y="314.3" font-size="7.0" fill="#1a22ff"  stroke="#1a22ff" stroke-width="0.15">MD12</text>
<rect x="628.5" y="308.5" width="37.0" height="8.0" fill="#fff" stroke="#5a5a5a" stroke-width="1.0"/>
<text x="631.0" y="314.8" font-size="7.0" fill="#111"  stroke="#111" stroke-width="0.15">PHOTO 84</text>
<text x="607.7" y="360.1" font-size="7.0" fill="#1a22ff"  stroke="#1a22ff" stroke-width="0.15">MI21</text>
<rect x="626.5" y="354.5" width="37.0" height="8.0" fill="#fff" stroke="#5a5a5a" stroke-width="1.0"/>
<text x="628.5" y="361.1" font-size="7.0" fill="#111"  stroke="#111" stroke-width="0.15">PHOTO 45</text>
<line x1="425" y1="362.2" x2="598" y2="362.2" stroke="#606060" stroke-width="0.9" stroke-dasharray="3 2.4"/>
<text x="418.5" y="391.4" font-size="7.0" fill="#111"  stroke="#111" stroke-width="0.15" text-anchor="end">0.5B</text>
<text x="447.5" y="391.4" font-size="7.0" fill="#111"  stroke="#111" stroke-width="0.15" text-anchor="end">0.5Br</text>
<text x="418.5" y="404.9" font-size="7.0" fill="#111"  stroke="#111" stroke-width="0.15" text-anchor="end">1</text>
<text x="447.5" y="404.9" font-size="7.0" fill="#111"  stroke="#111" stroke-width="0.15" text-anchor="end">13</text>
<text x="572.5" y="390.7" font-size="7.0" fill="#111"  stroke="#111" stroke-width="0.15" text-anchor="end">0.5L/O</text>
<text x="599.5" y="390.7" font-size="7.0" fill="#111"  stroke="#111" stroke-width="0.15" text-anchor="end">0.5G/O</text>
<text x="572.5" y="404.1" font-size="7.0" fill="#111"  stroke="#111" stroke-width="0.15" text-anchor="end">2</text>
<text x="599.5" y="404.1" font-size="7.0" fill="#111"  stroke="#111" stroke-width="0.15" text-anchor="end">14</text>
<text x="604.5" y="404.1" font-size="7.0" fill="#1a22ff"  stroke="#1a22ff" stroke-width="0.15">I11</text>
<line x1="229.3" y1="449" x2="229.3" y2="502.5" stroke="#111" stroke-width="1.3"/>
<line x1="304" y1="449" x2="304" y2="502.5" stroke="#111" stroke-width="1.3"/>
<text x="227" y="459.9" font-size="7.0" fill="#111"  stroke="#111" stroke-width="0.15" text-anchor="end">6</text>
<text x="302" y="459.9" font-size="7.0" fill="#111"  stroke="#111" stroke-width="0.15" text-anchor="end">18</text>
<text x="227" y="467.0" font-size="7.0" fill="#111"  stroke="#111" stroke-width="0.15" text-anchor="end">0.5R/O</text>
<text x="302" y="467.0" font-size="7.0" fill="#111"  stroke="#111" stroke-width="0.15" text-anchor="end">0.5B</text>
<text x="223.8" y="479.4" font-size="7.0" fill="#111"  stroke="#111" stroke-width="0.15" text-anchor="end">23</text>
<text x="234.5" y="479.4" font-size="7.0" fill="#1a22ff"  stroke="#1a22ff" stroke-width="0.15">MI11</text>
<text x="298.5" y="479.4" font-size="7.0" fill="#111"  stroke="#111" stroke-width="0.15" text-anchor="end">11</text>
<text x="309.5" y="479.4" font-size="7.0" fill="#1a22ff"  stroke="#1a22ff" stroke-width="0.15">MI21</text>
<rect x="235.5" y="481.5" width="39.0" height="7.0" fill="#fff" stroke="#5a5a5a" stroke-width="1.0"/>
<text x="237.8" y="487.3" font-size="7.0" fill="#111"  stroke="#111" stroke-width="0.15">PHOTO 45</text>
<rect x="311.5" y="481.5" width="38.0" height="7.0" fill="#fff" stroke="#5a5a5a" stroke-width="1.0"/>
<text x="313.6" y="487.3" font-size="7.0" fill="#111"  stroke="#111" stroke-width="0.15">PHOTO 45</text>
<text x="227" y="491.6" font-size="7.0" fill="#111"  stroke="#111" stroke-width="0.15" text-anchor="end">0.3R/O</text>
<text x="302" y="491.6" font-size="7.0" fill="#111"  stroke="#111" stroke-width="0.15" text-anchor="end">0.5B</text>
<text x="227" y="499.9" font-size="7.0" fill="#111"  stroke="#111" stroke-width="0.15" text-anchor="end">3</text>
<text x="302" y="499.9" font-size="7.0" fill="#111"  stroke="#111" stroke-width="0.15" text-anchor="end">5</text>
<text x="309.5" y="499.9" font-size="7.0" fill="#1a22ff"  stroke="#1a22ff" stroke-width="0.15">M18</text>
<line x1="233" y1="502.7" x2="300" y2="502.7" stroke="#a8a8a8" stroke-width="1.0" stroke-dasharray="3 2"/>
<rect x="210.5" y="506.4" width="137.3" height="34.4" fill="#80cee1" stroke="#111" stroke-width="1.3" stroke-dasharray="3 1.7"/>
<rect x="217.4" y="512.7" width="98.3" height="22.1" fill="none" stroke="#111" stroke-width="1.5"/>
<line x1="229.3" y1="503" x2="229.3" y2="502.3" stroke="#111" stroke-width="1.3"/>
<polyline points="224.70000000000002,506.6 229.3,502.4 233.9,506.6" stroke="#111" stroke-width="0.9" fill="#fff"/>
<polyline points="224.70000000000002,540.7 229.3,544.8 233.9,540.7" stroke="#111" stroke-width="0.9" fill="#fff"/>
<line x1="229.3" y1="544.8" x2="229.3" y2="556" stroke="#111" stroke-width="1.3"/>
<line x1="229.3" y1="506.6" x2="229.3" y2="517.7" stroke="#333" stroke-width="0.7"/>
<line x1="229.3" y1="524.8" x2="229.3" y2="540.7" stroke="#333" stroke-width="0.7"/>
<polyline points="225.10000000000002,511 229.3,507.2 233.5,511" stroke="#333" stroke-width="0.7" fill="none"/>
<polyline points="225.10000000000002,536.4 229.3,540.2 233.5,536.4" stroke="#333" stroke-width="0.7" fill="none"/>
<path d="M229.3,517.7 A6.6,6.6 0 0,0 229.70000000000002,531.2 A5.4,5.4 0 0,0 229.70000000000002,520.4 A4,4 0 0,0 229.70000000000002,528.4 A2.6,2.6 0 0,0 229.70000000000002,523.2 A1.4,1.4 0 0,0 229.70000000000002,526" fill="none" stroke="#333" stroke-width="0.7"/>
<line x1="304" y1="503" x2="304" y2="502.3" stroke="#111" stroke-width="1.3"/>
<polyline points="299.4,506.6 304,502.4 308.6,506.6" stroke="#111" stroke-width="0.9" fill="#fff"/>
<polyline points="299.4,540.7 304,544.8 308.6,540.7" stroke="#111" stroke-width="0.9" fill="#fff"/>
<line x1="304" y1="544.8" x2="304" y2="556" stroke="#111" stroke-width="1.3"/>
<line x1="304" y1="506.6" x2="304" y2="517.7" stroke="#333" stroke-width="0.7"/>
<line x1="304" y1="524.8" x2="304" y2="540.7" stroke="#333" stroke-width="0.7"/>
<polyline points="299.8,511 304,507.2 308.2,511" stroke="#333" stroke-width="0.7" fill="none"/>
<polyline points="299.8,536.4 304,540.2 308.2,536.4" stroke="#333" stroke-width="0.7" fill="none"/>
<path d="M304,517.7 A6.6,6.6 0 0,0 304.4,531.2 A5.4,5.4 0 0,0 304.4,520.4 A4,4 0 0,0 304.4,528.4 A2.6,2.6 0 0,0 304.4,523.2 A1.4,1.4 0 0,0 304.4,526" fill="none" stroke="#333" stroke-width="0.7"/>
<text x="317.6" y="517.4" font-size="7.0" fill="#111"  stroke="#111" stroke-width="0.15">CLOCK</text>
<text x="317.6" y="524.4" font-size="7.0" fill="#111"  stroke="#111" stroke-width="0.15">SPRING</text>
<text x="350" y="512.4" font-size="7.0" fill="#111"  stroke="#111" stroke-width="0.15">MULTIFUNCTION</text>
<text x="350" y="519.6" font-size="7.0" fill="#111"  stroke="#111" stroke-width="0.15">SWITCH</text>
<rect x="350.5" y="522.5" width="40.0" height="8.0" fill="#fff" stroke="#5a5a5a" stroke-width="1.0"/>
<text x="352.5" y="528.8" font-size="7.0" fill="#111"  stroke="#111" stroke-width="0.15">PHOTO 52</text>
<line x1="233" y1="543.9" x2="300" y2="543.9" stroke="#a8a8a8" stroke-width="1.0" stroke-dasharray="3 2"/>
<text x="227" y="551.2" font-size="7.0" fill="#111"  stroke="#111" stroke-width="0.15" text-anchor="end">4</text>
<text x="302" y="551.2" font-size="7.0" fill="#111"  stroke="#111" stroke-width="0.15" text-anchor="end">2</text>
<text x="309.5" y="551.2" font-size="7.0" fill="#1a22ff"  stroke="#1a22ff" stroke-width="0.15">M18-1</text>
<rect x="206.5" y="558.5" width="221.4" height="78.5" fill="#80cee1" stroke="#111" stroke-width="1.3" stroke-dasharray="3 1.7"/>
<rect x="216" y="568.6" width="202.4" height="56.3" fill="none" stroke="#111" stroke-width="1.5"/>
<text x="429.1" y="564.9" font-size="7.0" fill="#111"  stroke="#111" stroke-width="0.15">STEERING</text>
<text x="429.1" y="572.0" font-size="7.0" fill="#111"  stroke="#111" stroke-width="0.15">WHEEL</text>
<text x="321.7" y="634.7" font-size="7.0" fill="#111"  stroke="#111" stroke-width="0.15" text-anchor="middle">AUDIO REMOCON SWITCH</text>
<polyline points="229.6,556 229.6,617 389.8,617 389.8,607.4" stroke="#222" stroke-width="0.8" fill="none"/>
<line x1="303.6" y1="556" x2="303.6" y2="576.6" stroke="#111" stroke-width="1.3"/>
<polyline points="280.4,594.7 280.4,576.6 383.4,576.6 383.4,594.7" stroke="#222" stroke-width="0.8" fill="none"/>
<line x1="303.9" y1="576.6" x2="303.9" y2="594.7" stroke="#222" stroke-width="0.8"/>
<line x1="330.6" y1="576.6" x2="330.6" y2="594.7" stroke="#222" stroke-width="0.8"/>
<line x1="355.7" y1="576.6" x2="355.7" y2="594.7" stroke="#222" stroke-width="0.8"/>
<circle cx="303.6" cy="576.6" r="1.5" fill="#111"/>
<circle cx="330.6" cy="576.6" r="1.5" fill="#111"/>
<circle cx="355.7" cy="576.6" r="1.5" fill="#111"/>
<text x="283.3" y="584.8" font-size="7.0" fill="#111"  stroke="#111" stroke-width="0.15">SEEK</text>
<text x="283.3" y="591.8" font-size="7.0" fill="#111"  stroke="#111" stroke-width="0.15">UP</text>
<text x="306.5" y="584.8" font-size="7.0" fill="#111"  stroke="#111" stroke-width="0.15">MODE</text>
<text x="335.1" y="584.8" font-size="7.0" fill="#111"  stroke="#111" stroke-width="0.15">VOL</text>
<text x="335.1" y="591.8" font-size="7.0" fill="#111"  stroke="#111" stroke-width="0.15">UP</text>
<text x="358.9" y="584.8" font-size="7.0" fill="#111"  stroke="#111" stroke-width="0.15">VOL</text>
<text x="358.9" y="591.8" font-size="7.0" fill="#111"  stroke="#111" stroke-width="0.15">DOWN</text>
<text x="386.6" y="584.8" font-size="7.0" fill="#111"  stroke="#111" stroke-width="0.15">PRESET</text>
<circle cx="280.4" cy="594.7" r="1.5" fill="#111"/>
<line x1="280.4" y1="594.7" x2="275.3" y2="607.4" stroke="#222" stroke-width="0.8"/>
<circle cx="275.3" cy="607.4" r="1.5" fill="#111"/>
<circle cx="287.1" cy="607.4" r="1.5" fill="#111"/>
<line x1="287.1" y1="607.4" x2="287.1" y2="617" stroke="#222" stroke-width="0.8"/>
<path d="M276.3,608.2 q5,3.8 10,-0.4" fill="none" stroke="#333" stroke-width="0.6" stroke-dasharray="1.2 0.9"/>
<circle cx="303.9" cy="594.7" r="1.5" fill="#111"/>
<line x1="303.9" y1="594.7" x2="298.5" y2="607.4" stroke="#222" stroke-width="0.8"/>
<circle cx="298.5" cy="607.4" r="1.5" fill="#111"/>
<circle cx="309.7" cy="607.4" r="1.5" fill="#111"/>
<line x1="309.7" y1="607.4" x2="309.7" y2="617" stroke="#222" stroke-width="0.8"/>
<path d="M299.5,608.2 q5,3.8 10,-0.4" fill="none" stroke="#333" stroke-width="0.6" stroke-dasharray="1.2 0.9"/>
<circle cx="330.3" cy="594.7" r="1.5" fill="#111"/>
<line x1="330.3" y1="594.7" x2="325.6" y2="607.4" stroke="#222" stroke-width="0.8"/>
<circle cx="325.6" cy="607.4" r="1.5" fill="#111"/>
<circle cx="336.7" cy="607.4" r="1.5" fill="#111"/>
<line x1="336.7" y1="607.4" x2="336.7" y2="617" stroke="#222" stroke-width="0.8"/>
<path d="M326.6,608.2 q5,3.8 10,-0.4" fill="none" stroke="#333" stroke-width="0.6" stroke-dasharray="1.2 0.9"/>
<circle cx="355.8" cy="594.7" r="1.5" fill="#111"/>
<line x1="355.8" y1="594.7" x2="350" y2="607.4" stroke="#222" stroke-width="0.8"/>
<circle cx="350" cy="607.4" r="1.5" fill="#111"/>
<circle cx="362.8" cy="607.4" r="1.5" fill="#111"/>
<line x1="362.8" y1="607.4" x2="362.8" y2="617" stroke="#222" stroke-width="0.8"/>
<path d="M351,608.2 q5,3.8 10,-0.4" fill="none" stroke="#333" stroke-width="0.6" stroke-dasharray="1.2 0.9"/>
<circle cx="383.4" cy="594.7" r="1.5" fill="#111"/>
<line x1="383.4" y1="594.7" x2="378" y2="607.4" stroke="#222" stroke-width="0.8"/>
<circle cx="378" cy="607.4" r="1.5" fill="#111"/>
<circle cx="389.8" cy="607.4" r="1.5" fill="#111"/>
<line x1="389.8" y1="607.4" x2="389.8" y2="617" stroke="#222" stroke-width="0.8"/>
<path d="M379,608.2 q5,3.8 10,-0.4" fill="none" stroke="#333" stroke-width="0.6" stroke-dasharray="1.2 0.9"/>
<circle cx="287.1" cy="617" r="1.5" fill="#111"/>
<circle cx="309.7" cy="617" r="1.5" fill="#111"/>
<circle cx="336.7" cy="617" r="1.5" fill="#111"/>
<circle cx="362.8" cy="617" r="1.5" fill="#111"/>
<path d="M264.6,617 l1.5,-2.5 l1.5,5 l1.5,-5 l1.5,5 l1.5,-5 l1.5,5 l1.5,-2.5" fill="none" stroke="#222" stroke-width="0.6"/>
<path d="M291.9,617 l1.5,-2.5 l1.5,5 l1.5,-5 l1.5,5 l1.5,-5 l1.5,5 l1.5,-2.5" fill="none" stroke="#222" stroke-width="0.6"/>
<path d="M317.9,617 l1.5,-2.5 l1.5,5 l1.5,-5 l1.5,5 l1.5,-5 l1.5,5 l1.5,-2.5" fill="none" stroke="#222" stroke-width="0.6"/>
<path d="M342.8,617 l1.5,-2.5 l1.5,5 l1.5,-5 l1.5,5 l1.5,-5 l1.5,5 l1.5,-2.5" fill="none" stroke="#222" stroke-width="0.6"/>
<path d="M371.5,617 l1.5,-2.5 l1.5,5 l1.5,-5 l1.5,5 l1.5,-5 l1.5,5 l1.5,-2.5" fill="none" stroke="#222" stroke-width="0.6"/>
<line x1="389" y1="449" x2="389" y2="478" stroke="#111" stroke-width="1.3"/>
<line x1="424" y1="449" x2="424" y2="476" stroke="#111" stroke-width="1.3"/>
<text x="386.2" y="459.9" font-size="7.0" fill="#111"  stroke="#111" stroke-width="0.15" text-anchor="end">5</text>
<text x="420.8" y="459.9" font-size="7.0" fill="#111"  stroke="#111" stroke-width="0.15" text-anchor="end">17</text>
<text x="386.2" y="473.1" font-size="7.0" fill="#111"  stroke="#111" stroke-width="0.15" text-anchor="end">0.5R/B</text>
<text x="420.8" y="473.1" font-size="7.0" fill="#111"  stroke="#111" stroke-width="0.15" text-anchor="end">0.5Y</text>
<polygon points="389,475.6 385.2,481.8 392.8,481.8" fill="#111" stroke="none" stroke-width="1"/>
<polygon points="424,481.8 420.2,476.2 427.8,476.2" fill="#111" stroke="none" stroke-width="1"/>
<polyline points="380.9,480.5 385,484.3 402.3,484.3 406.5,487.4 410.6,484.3 429.1,484.3 433.3,480.5" stroke="#222" stroke-width="0.9" fill="none"/>
<text x="406.5" y="495.3" font-size="7.0" fill="#111"  stroke="#111" stroke-width="0.15" text-anchor="middle">See Illuminations</text>
<text x="406.5" y="502.4" font-size="7.0" fill="#1a22ff"  stroke="#1a22ff" stroke-width="0.15" text-anchor="middle">(SD941-3)</text>
<line x1="492.8" y1="449" x2="492.8" y2="633" stroke="#111" stroke-width="1.3"/>
<line x1="553" y1="449" x2="553" y2="633" stroke="#111" stroke-width="1.3"/>
<line x1="594" y1="449" x2="594" y2="633" stroke="#111" stroke-width="1.3"/>
<line x1="653.2" y1="449" x2="653.2" y2="633" stroke="#111" stroke-width="1.3"/>
<line x1="689.2" y1="449" x2="689.2" y2="612" stroke="#111" stroke-width="1.3"/>
<text x="490.3" y="459.9" font-size="7.0" fill="#111"  stroke="#111" stroke-width="0.15" text-anchor="end">4</text>
<text x="550.8" y="460.9" font-size="7.0" fill="#111"  stroke="#111" stroke-width="0.15" text-anchor="end">16</text>
<text x="592.3" y="460.9" font-size="7.0" fill="#111"  stroke="#111" stroke-width="0.15" text-anchor="end">3</text>
<text x="651.2" y="460.9" font-size="7.0" fill="#111"  stroke="#111" stroke-width="0.15" text-anchor="end">15</text>
<text x="686" y="460.9" font-size="7.0" fill="#111"  stroke="#111" stroke-width="0.15" text-anchor="end">24</text>
<text x="692.3" y="460.9" font-size="7.0" fill="#1a22ff"  stroke="#1a22ff" stroke-width="0.15">I11</text>
<text x="490.3" y="473.1" font-size="7.0" fill="#111"  stroke="#111" stroke-width="0.15" text-anchor="end">0.5L</text>
<text x="550.8" y="473.1" font-size="7.0" fill="#111"  stroke="#111" stroke-width="0.15" text-anchor="end">0.5G</text>
<text x="592.3" y="473.1" font-size="7.0" fill="#111"  stroke="#111" stroke-width="0.15" text-anchor="end">0.5Y</text>
<text x="651.2" y="473.1" font-size="7.0" fill="#111"  stroke="#111" stroke-width="0.15" text-anchor="end">0.5L</text>
<text x="686" y="473.1" font-size="7.0" fill="#111"  stroke="#111" stroke-width="0.15" text-anchor="end">1.25B</text>
<text x="487.3" y="488.6" font-size="7.0" fill="#111"  stroke="#111" stroke-width="0.15" text-anchor="end">6</text>
<text x="547.5" y="489.3" font-size="7.0" fill="#111"  stroke="#111" stroke-width="0.15" text-anchor="end">16</text>
<text x="560" y="489.3" font-size="7.0" fill="#1a22ff"  stroke="#1a22ff" stroke-width="0.15">IF11</text>
<text x="588.5" y="489.3" font-size="7.0" fill="#111"  stroke="#111" stroke-width="0.15" text-anchor="end">2</text>
<text x="647.6" y="489.3" font-size="7.0" fill="#111"  stroke="#111" stroke-width="0.15" text-anchor="end">12</text>
<text x="658.2" y="489.3" font-size="7.0" fill="#1a22ff"  stroke="#1a22ff" stroke-width="0.15">IF12</text>
<line x1="497" y1="489.8" x2="649" y2="489.8" stroke="#5a5a5a" stroke-width="0.9" stroke-dasharray="3 2.6"/>
<rect x="559.5" y="491.5" width="28.0" height="16.0" fill="#fff" stroke="#5a5a5a" stroke-width="1.0"/>
<text x="561.6" y="498.5" font-size="7.0" fill="#111"  stroke="#111" stroke-width="0.15">PHOTO</text>
<text x="561.6" y="505.7" font-size="7.0" fill="#111"  stroke="#111" stroke-width="0.15">47</text>
<rect x="658.5" y="491.5" width="29.0" height="16.0" fill="#fff" stroke="#5a5a5a" stroke-width="1.0"/>
<text x="660.4000000000001" y="498.5" font-size="7.0" fill="#111"  stroke="#111" stroke-width="0.15">PHOTO</text>
<text x="660.4000000000001" y="505.7" font-size="7.0" fill="#111"  stroke="#111" stroke-width="0.15">65</text>
<text x="490.3" y="506.5" font-size="7.0" fill="#111"  stroke="#111" stroke-width="0.15" text-anchor="end">0.5L</text>
<text x="550.8" y="506.9" font-size="7.0" fill="#111"  stroke="#111" stroke-width="0.15" text-anchor="end">0.5G</text>
<text x="651.2" y="506.9" font-size="7.0" fill="#111"  stroke="#111" stroke-width="0.15" text-anchor="end">0.5L</text>
<text x="592.3" y="513.5" font-size="7.0" fill="#111"  stroke="#111" stroke-width="0.15" text-anchor="end">0.5Y</text>
<text x="487.3" y="523.2" font-size="7.0" fill="#111"  stroke="#111" stroke-width="0.15" text-anchor="end">2</text>
<text x="547.5" y="523.5" font-size="7.0" fill="#111"  stroke="#111" stroke-width="0.15" text-anchor="end">6</text>
<text x="559" y="523.5" font-size="7.0" fill="#1a22ff"  stroke="#1a22ff" stroke-width="0.15">FD11</text>
<text x="588.5" y="523.5" font-size="7.0" fill="#111"  stroke="#111" stroke-width="0.15" text-anchor="end">2</text>
<text x="647.6" y="523.5" font-size="7.0" fill="#111"  stroke="#111" stroke-width="0.15" text-anchor="end">6</text>
<text x="658" y="523.5" font-size="7.0" fill="#1a22ff"  stroke="#1a22ff" stroke-width="0.15">FD12</text>
<line x1="497" y1="525" x2="649" y2="525" stroke="#5a5a5a" stroke-width="0.9" stroke-dasharray="3 2.6"/>
<rect x="559.5" y="525.5" width="28.0" height="16.0" fill="#fff" stroke="#5a5a5a" stroke-width="1.0"/>
<text x="561.6" y="532.6" font-size="7.0" fill="#111"  stroke="#111" stroke-width="0.15">PHOTO</text>
<text x="561.6" y="539.8" font-size="7.0" fill="#111"  stroke="#111" stroke-width="0.15">73</text>
<rect x="658.5" y="525.5" width="29.0" height="16.0" fill="#fff" stroke="#5a5a5a" stroke-width="1.0"/>
<text x="660.4000000000001" y="532.6" font-size="7.0" fill="#111"  stroke="#111" stroke-width="0.15">PHOTO</text>
<text x="660.4000000000001" y="539.8" font-size="7.0" fill="#111"  stroke="#111" stroke-width="0.15">74</text>
<text x="490.3" y="539.1" font-size="7.0" fill="#111"  stroke="#111" stroke-width="0.15" text-anchor="end">0.5L</text>
<text x="550.8" y="540.6" font-size="7.0" fill="#111"  stroke="#111" stroke-width="0.15" text-anchor="end">0.5G</text>
<text x="651.2" y="540.6" font-size="7.0" fill="#111"  stroke="#111" stroke-width="0.15" text-anchor="end">0.5G</text>
<text x="592.3" y="550.5" font-size="7.0" fill="#111"  stroke="#111" stroke-width="0.15" text-anchor="end">0.5L</text>
<rect x="483.8" y="569.1" width="17.80000000000001" height="34.10000000000002" fill="#80cee1" stroke="#111" stroke-width="1.3"/>
<polygon points="501.6,569.1 513.0,558.9 513.0,613.6 501.6,603.2" fill="#80cee1" stroke="#111" stroke-width="1.3"/>
<path d="M493.3,569.1 L493.3,574.1 c3.8,0.3 3.8,5.5 0,5.8 c3.8,0.3 3.8,5.5 0,5.8 c3.8,0.3 3.8,5.5 0,5.8 c3.8,0.3 3.8,5.5 0,5.8 L493.3,603.2" fill="none" stroke="#3a4a50" stroke-width="0.7"/>
<text x="487.3" y="560.5" font-size="7.0" fill="#111"  stroke="#111" stroke-width="0.15" text-anchor="end">2</text>
<text x="497.8" y="560.5" font-size="7.0" fill="#1a22ff"  stroke="#1a22ff" stroke-width="0.15">D45</text>
<text x="487.3" y="618.4" font-size="7.0" fill="#111"  stroke="#111" stroke-width="0.15" text-anchor="end">1</text>
<text x="497.8" y="618.4" font-size="7.0" fill="#1a22ff"  stroke="#1a22ff" stroke-width="0.15">D45</text>
<text x="514.8" y="562.9" font-size="7.0" fill="#111"  stroke="#111" stroke-width="0.15">REAR</text>
<text x="514.8" y="569.9" font-size="7.0" fill="#111"  stroke="#111" stroke-width="0.15">DOOR</text>
<text x="514.8" y="576.9" font-size="7.0" fill="#111"  stroke="#111" stroke-width="0.15">SPEAKER</text>
<text x="514.8" y="583.9" font-size="7.0" fill="#111"  stroke="#111" stroke-width="0.15">LH</text>
<rect x="515.5" y="586.5" width="29.0" height="15.0" fill="#fff" stroke="#5a5a5a" stroke-width="1.0"/>
<text x="517.5" y="593.5" font-size="7.0" fill="#111"  stroke="#111" stroke-width="0.15">PHOTO</text>
<text x="517.5" y="600.7" font-size="7.0" fill="#111"  stroke="#111" stroke-width="0.15">86</text>
<rect x="585" y="569.1" width="17.799999999999955" height="34.10000000000002" fill="#80cee1" stroke="#111" stroke-width="1.3"/>
<polygon points="602.8,569.1 614.2,558.9 614.2,613.6 602.8,603.2" fill="#80cee1" stroke="#111" stroke-width="1.3"/>
<path d="M594.5,569.1 L594.5,574.1 c3.8,0.3 3.8,5.5 0,5.8 c3.8,0.3 3.8,5.5 0,5.8 c3.8,0.3 3.8,5.5 0,5.8 c3.8,0.3 3.8,5.5 0,5.8 L594.5,603.2" fill="none" stroke="#3a4a50" stroke-width="0.7"/>
<text x="588.5" y="560.5" font-size="7.0" fill="#111"  stroke="#111" stroke-width="0.15" text-anchor="end">2</text>
<text x="599" y="560.5" font-size="7.0" fill="#1a22ff"  stroke="#1a22ff" stroke-width="0.15">D55</text>
<text x="588.5" y="618.4" font-size="7.0" fill="#111"  stroke="#111" stroke-width="0.15" text-anchor="end">1</text>
<text x="599" y="618.4" font-size="7.0" fill="#1a22ff"  stroke="#1a22ff" stroke-width="0.15">D55</text>
<text x="616" y="562.9" font-size="7.0" fill="#111"  stroke="#111" stroke-width="0.15">REAR</text>
<text x="616" y="569.9" font-size="7.0" fill="#111"  stroke="#111" stroke-width="0.15">DOOR</text>
<text x="616" y="576.9" font-size="7.0" fill="#111"  stroke="#111" stroke-width="0.15">SPEAKER</text>
<text x="616" y="583.9" font-size="7.0" fill="#111"  stroke="#111" stroke-width="0.15">RH</text>
<rect x="616.5" y="586.5" width="29.0" height="15.0" fill="#fff" stroke="#5a5a5a" stroke-width="1.0"/>
<text x="618.7" y="593.5" font-size="7.0" fill="#111"  stroke="#111" stroke-width="0.15">PHOTO</text>
<text x="618.7" y="600.7" font-size="7.0" fill="#111"  stroke="#111" stroke-width="0.15">86</text>
<polyline points="492.8,619 492.8,633 553,633 553,449" stroke="#111" stroke-width="1.3" fill="none"/>
<polyline points="594,619 594,633 653.2,633 653.2,449" stroke="#111" stroke-width="1.3" fill="none"/>
<circle cx="689.2" cy="615.5" r="4.4" fill="#fff" stroke="#111" stroke-width="1.2"/>
<polygon points="689.2,613.5 691.5,615.8 689.2,618.1 686.9,615.8" fill="#111" stroke="none" stroke-width="1"/>
<line x1="683" y1="620.3" x2="695.5" y2="620.3" stroke="#111" stroke-width="1.1"/>
<line x1="685.5" y1="623.3" x2="693" y2="623.3" stroke="#111" stroke-width="1.0"/>
<line x1="688" y1="626.4" x2="690.5" y2="626.4" stroke="#111" stroke-width="1.0"/>
<text x="682.8" y="634.5" font-size="6.8" fill="#1a22ff"  stroke="#1a22ff" stroke-width="0.15">G08</text>
<rect x="698.5" y="628.5" width="38.0" height="9.0" fill="#fff" stroke="#5a5a5a" stroke-width="1.0"/>
<text x="700.8" y="636.1" font-size="7.0" fill="#111"  stroke="#111" stroke-width="0.15">PHOTO 57</text>
<line x1="196.3" y1="260.2" x2="196.3" y2="264.5" stroke="#fff" stroke-width="1.6"/>
<polyline points="191.9,264.5 196.3,260.4 200.70000000000002,264.5" stroke="#111" stroke-width="0.9" fill="#fff"/>
<line x1="196.3" y1="280.5" x2="196.3" y2="284.8" stroke="#fff" stroke-width="1.6"/>
<polyline points="191.9,280.5 196.3,284.6 200.70000000000002,280.5" stroke="#111" stroke-width="0.9" fill="#fff"/>
<line x1="50.3" y1="280.5" x2="50.3" y2="284.8" stroke="#fff" stroke-width="1.6"/>
<polyline points="45.9,280.5 50.3,284.6 54.699999999999996,280.5" stroke="#111" stroke-width="0.9" fill="#fff"/>
<line x1="50.2" y1="318.70000000000005" x2="50.2" y2="321.6" stroke="#fff" stroke-width="1.8"/>
<polyline points="46.0,318.8 50.2,322.5 54.400000000000006,318.8" stroke="#222" stroke-width="0.9" fill="none"/>
<polyline points="46.0,314.40000000000003 50.2,318.1 54.400000000000006,314.40000000000003" stroke="#222" stroke-width="0.9" fill="none"/>
<line x1="196.3" y1="314.7" x2="196.3" y2="317.59999999999997" stroke="#fff" stroke-width="1.8"/>
<polyline points="192.10000000000002,317.5 196.3,313.8 200.5,317.5" stroke="#222" stroke-width="0.9" fill="none"/>
<polyline points="192.10000000000002,321.9 196.3,318.2 200.5,321.9" stroke="#222" stroke-width="0.9" fill="none"/>
<line x1="196.3" y1="343.9" x2="196.3" y2="348.2" stroke="#fff" stroke-width="1.6"/>
<polyline points="191.9,348.2 196.3,344.09999999999997 200.70000000000002,348.2" stroke="#111" stroke-width="0.9" fill="#fff"/>
<line x1="196.3" y1="371.6" x2="196.3" y2="375.90000000000003" stroke="#fff" stroke-width="1.6"/>
<polyline points="191.9,371.6 196.3,375.70000000000005 200.70000000000002,371.6" stroke="#111" stroke-width="0.9" fill="#fff"/>
<line x1="88.4" y1="366.70000000000005" x2="88.4" y2="369.6" stroke="#fff" stroke-width="1.8"/>
<polyline points="84.2,366.8 88.4,370.5 92.60000000000001,366.8" stroke="#222" stroke-width="0.9" fill="none"/>
<polyline points="84.2,362.40000000000003 88.4,366.1 92.60000000000001,362.40000000000003" stroke="#222" stroke-width="0.9" fill="none"/>
<line x1="139.2" y1="366.70000000000005" x2="139.2" y2="369.6" stroke="#fff" stroke-width="1.8"/>
<polyline points="135.0,366.8 139.2,370.5 143.39999999999998,366.8" stroke="#222" stroke-width="0.9" fill="none"/>
<polyline points="135.0,362.40000000000003 139.2,366.1 143.39999999999998,362.40000000000003" stroke="#222" stroke-width="0.9" fill="none"/>
<line x1="139.2" y1="405.9" x2="139.2" y2="410.2" stroke="#fff" stroke-width="1.6"/>
<polyline points="134.79999999999998,410.2 139.2,406.09999999999997 143.6,410.2" stroke="#111" stroke-width="0.9" fill="#fff"/>
<line x1="196.3" y1="405.9" x2="196.3" y2="410.2" stroke="#fff" stroke-width="1.6"/>
<polyline points="191.9,410.2 196.3,406.09999999999997 200.70000000000002,410.2" stroke="#111" stroke-width="0.9" fill="#fff"/>
<line x1="347.4" y1="405.9" x2="347.4" y2="410.2" stroke="#fff" stroke-width="1.6"/>
<polyline points="343.0,410.2 347.4,406.09999999999997 351.79999999999995,410.2" stroke="#111" stroke-width="0.9" fill="#fff"/>
<line x1="420.9" y1="405.9" x2="420.9" y2="410.2" stroke="#fff" stroke-width="1.6"/>
<polyline points="416.5,410.2 420.9,406.09999999999997 425.29999999999995,410.2" stroke="#111" stroke-width="0.9" fill="#fff"/>
<line x1="449.8" y1="405.9" x2="449.8" y2="410.2" stroke="#fff" stroke-width="1.6"/>
<polyline points="445.40000000000003,410.2 449.8,406.09999999999997 454.2,410.2" stroke="#111" stroke-width="0.9" fill="#fff"/>
<line x1="574.7" y1="405.9" x2="574.7" y2="410.2" stroke="#fff" stroke-width="1.6"/>
<polyline points="570.3000000000001,410.2 574.7,406.09999999999997 579.1,410.2" stroke="#111" stroke-width="0.9" fill="#fff"/>
<line x1="601.5" y1="405.9" x2="601.5" y2="410.2" stroke="#fff" stroke-width="1.6"/>
<polyline points="597.1,410.2 601.5,406.09999999999997 605.9,410.2" stroke="#111" stroke-width="0.9" fill="#fff"/>
<line x1="229.3" y1="448.8" x2="229.3" y2="453.1" stroke="#fff" stroke-width="1.6"/>
<polyline points="224.9,448.8 229.3,452.90000000000003 233.70000000000002,448.8" stroke="#111" stroke-width="0.9" fill="#fff"/>
<line x1="304" y1="448.8" x2="304" y2="453.1" stroke="#fff" stroke-width="1.6"/>
<polyline points="299.6,448.8 304,452.90000000000003 308.4,448.8" stroke="#111" stroke-width="0.9" fill="#fff"/>
<line x1="389" y1="448.8" x2="389" y2="453.1" stroke="#fff" stroke-width="1.6"/>
<polyline points="384.6,448.8 389,452.90000000000003 393.4,448.8" stroke="#111" stroke-width="0.9" fill="#fff"/>
<line x1="424" y1="448.8" x2="424" y2="453.1" stroke="#fff" stroke-width="1.6"/>
<polyline points="419.6,448.8 424,452.90000000000003 428.4,448.8" stroke="#111" stroke-width="0.9" fill="#fff"/>
<line x1="492.8" y1="448.8" x2="492.8" y2="453.1" stroke="#fff" stroke-width="1.6"/>
<polyline points="488.40000000000003,448.8 492.8,452.90000000000003 497.2,448.8" stroke="#111" stroke-width="0.9" fill="#fff"/>
<line x1="553" y1="448.8" x2="553" y2="453.1" stroke="#fff" stroke-width="1.6"/>
<polyline points="548.6,448.8 553,452.90000000000003 557.4,448.8" stroke="#111" stroke-width="0.9" fill="#fff"/>
<line x1="594" y1="448.8" x2="594" y2="453.1" stroke="#fff" stroke-width="1.6"/>
<polyline points="589.6,448.8 594,452.90000000000003 598.4,448.8" stroke="#111" stroke-width="0.9" fill="#fff"/>
<line x1="653.2" y1="448.8" x2="653.2" y2="453.1" stroke="#fff" stroke-width="1.6"/>
<polyline points="648.8000000000001,448.8 653.2,452.90000000000003 657.6,448.8" stroke="#111" stroke-width="0.9" fill="#fff"/>
<line x1="689.2" y1="448.8" x2="689.2" y2="453.1" stroke="#fff" stroke-width="1.6"/>
<polyline points="684.8000000000001,448.8 689.2,452.90000000000003 693.6,448.8" stroke="#111" stroke-width="0.9" fill="#fff"/>
<line x1="50.2" y1="438.29999999999995" x2="50.2" y2="441.19999999999993" stroke="#fff" stroke-width="1.8"/>
<polyline points="46.0,441.09999999999997 50.2,437.4 54.400000000000006,441.09999999999997" stroke="#222" stroke-width="0.9" fill="none"/>
<polyline points="46.0,445.49999999999994 50.2,441.79999999999995 54.400000000000006,445.49999999999994" stroke="#222" stroke-width="0.9" fill="none"/>
<line x1="88.2" y1="438.29999999999995" x2="88.2" y2="441.19999999999993" stroke="#fff" stroke-width="1.8"/>
<polyline points="84.0,441.09999999999997 88.2,437.4 92.4,441.09999999999997" stroke="#222" stroke-width="0.9" fill="none"/>
<polyline points="84.0,445.49999999999994 88.2,441.79999999999995 92.4,445.49999999999994" stroke="#222" stroke-width="0.9" fill="none"/>
<line x1="80.8" y1="574.7" x2="80.8" y2="577.6" stroke="#fff" stroke-width="1.8"/>
<polyline points="76.6,574.8 80.8,578.5 85.0,574.8" stroke="#222" stroke-width="0.9" fill="none"/>
<polyline points="76.6,570.4 80.8,574.1 85.0,570.4" stroke="#222" stroke-width="0.9" fill="none"/>
<line x1="347.4" y1="289.5" x2="347.4" y2="293.8" stroke="#fff" stroke-width="1.6"/>
<polyline points="343.0,293.8 347.4,289.7 351.79999999999995,293.8" stroke="#111" stroke-width="0.9" fill="#fff"/>
<line x1="347.4" y1="327.5" x2="347.4" y2="331.8" stroke="#fff" stroke-width="1.6"/>
<polyline points="343.0,327.5 347.4,331.6 351.79999999999995,327.5" stroke="#111" stroke-width="0.9" fill="#fff"/>
<line x1="449.8" y1="211.9" x2="449.8" y2="214.8" stroke="#fff" stroke-width="1.8"/>
<polyline points="445.6,214.7 449.8,211 454.0,214.7" stroke="#222" stroke-width="0.9" fill="none"/>
<polyline points="445.6,219.1 449.8,215.4 454.0,219.1" stroke="#222" stroke-width="0.9" fill="none"/>
<line x1="516.9" y1="211.9" x2="516.9" y2="214.8" stroke="#fff" stroke-width="1.8"/>
<polyline points="512.6999999999999,214.7 516.9,211 521.1,214.7" stroke="#222" stroke-width="0.9" fill="none"/>
<polyline points="512.6999999999999,219.1 516.9,215.4 521.1,219.1" stroke="#222" stroke-width="0.9" fill="none"/>
<line x1="449.8" y1="275.20000000000005" x2="449.8" y2="278.1" stroke="#fff" stroke-width="1.8"/>
<polyline points="445.6,275.3 449.8,279 454.0,275.3" stroke="#222" stroke-width="0.9" fill="none"/>
<polyline points="445.6,270.90000000000003 449.8,274.6 454.0,270.90000000000003" stroke="#222" stroke-width="0.9" fill="none"/>
<line x1="516.9" y1="275.20000000000005" x2="516.9" y2="278.1" stroke="#fff" stroke-width="1.8"/>
<polyline points="512.6999999999999,275.3 516.9,279 521.1,275.3" stroke="#222" stroke-width="0.9" fill="none"/>
<polyline points="512.6999999999999,270.90000000000003 516.9,274.6 521.1,270.90000000000003" stroke="#222" stroke-width="0.9" fill="none"/>
<line x1="601.5" y1="211.9" x2="601.5" y2="214.8" stroke="#fff" stroke-width="1.8"/>
<polyline points="597.3,214.7 601.5,211 605.7,214.7" stroke="#222" stroke-width="0.9" fill="none"/>
<polyline points="597.3,219.1 601.5,215.4 605.7,219.1" stroke="#222" stroke-width="0.9" fill="none"/>
<line x1="674.5" y1="211.9" x2="674.5" y2="214.8" stroke="#fff" stroke-width="1.8"/>
<polyline points="670.3,214.7 674.5,211 678.7,214.7" stroke="#222" stroke-width="0.9" fill="none"/>
<polyline points="670.3,219.1 674.5,215.4 678.7,219.1" stroke="#222" stroke-width="0.9" fill="none"/>
<line x1="601.5" y1="275.20000000000005" x2="601.5" y2="278.1" stroke="#fff" stroke-width="1.8"/>
<polyline points="597.3,275.3 601.5,279 605.7,275.3" stroke="#222" stroke-width="0.9" fill="none"/>
<polyline points="597.3,270.90000000000003 601.5,274.6 605.7,270.90000000000003" stroke="#222" stroke-width="0.9" fill="none"/>
<line x1="674.5" y1="275.20000000000005" x2="674.5" y2="278.1" stroke="#fff" stroke-width="1.8"/>
<polyline points="670.3,275.3 674.5,279 678.7,275.3" stroke="#222" stroke-width="0.9" fill="none"/>
<polyline points="670.3,270.90000000000003 674.5,274.6 678.7,270.90000000000003" stroke="#222" stroke-width="0.9" fill="none"/>
<line x1="420.9" y1="311.70000000000005" x2="420.9" y2="314.6" stroke="#fff" stroke-width="1.8"/>
<polyline points="416.7,311.8 420.9,315.5 425.09999999999997,311.8" stroke="#222" stroke-width="0.9" fill="none"/>
<polyline points="416.7,307.40000000000003 420.9,311.1 425.09999999999997,307.40000000000003" stroke="#222" stroke-width="0.9" fill="none"/>
<line x1="449.8" y1="311.70000000000005" x2="449.8" y2="314.6" stroke="#fff" stroke-width="1.8"/>
<polyline points="445.6,311.8 449.8,315.5 454.0,311.8" stroke="#222" stroke-width="0.9" fill="none"/>
<polyline points="445.6,307.40000000000003 449.8,311.1 454.0,307.40000000000003" stroke="#222" stroke-width="0.9" fill="none"/>
<line x1="420.9" y1="355.29999999999995" x2="420.9" y2="358.19999999999993" stroke="#fff" stroke-width="1.8"/>
<polyline points="416.7,358.09999999999997 420.9,354.4 425.09999999999997,358.09999999999997" stroke="#222" stroke-width="0.9" fill="none"/>
<polyline points="416.7,362.49999999999994 420.9,358.79999999999995 425.09999999999997,362.49999999999994" stroke="#222" stroke-width="0.9" fill="none"/>
<line x1="449.8" y1="355.29999999999995" x2="449.8" y2="358.19999999999993" stroke="#fff" stroke-width="1.8"/>
<polyline points="445.6,358.09999999999997 449.8,354.4 454.0,358.09999999999997" stroke="#222" stroke-width="0.9" fill="none"/>
<polyline points="445.6,362.49999999999994 449.8,358.79999999999995 454.0,362.49999999999994" stroke="#222" stroke-width="0.9" fill="none"/>
<line x1="574.7" y1="311.70000000000005" x2="574.7" y2="314.6" stroke="#fff" stroke-width="1.8"/>
<polyline points="570.5,311.8 574.7,315.5 578.9000000000001,311.8" stroke="#222" stroke-width="0.9" fill="none"/>
<polyline points="570.5,307.40000000000003 574.7,311.1 578.9000000000001,307.40000000000003" stroke="#222" stroke-width="0.9" fill="none"/>
<line x1="601.5" y1="311.70000000000005" x2="601.5" y2="314.6" stroke="#fff" stroke-width="1.8"/>
<polyline points="597.3,311.8 601.5,315.5 605.7,311.8" stroke="#222" stroke-width="0.9" fill="none"/>
<polyline points="597.3,307.40000000000003 601.5,311.1 605.7,307.40000000000003" stroke="#222" stroke-width="0.9" fill="none"/>
<line x1="574.7" y1="355.29999999999995" x2="574.7" y2="358.19999999999993" stroke="#fff" stroke-width="1.8"/>
<polyline points="570.5,358.09999999999997 574.7,354.4 578.9000000000001,358.09999999999997" stroke="#222" stroke-width="0.9" fill="none"/>
<polyline points="570.5,362.49999999999994 574.7,358.79999999999995 578.9000000000001,362.49999999999994" stroke="#222" stroke-width="0.9" fill="none"/>
<line x1="601.5" y1="355.29999999999995" x2="601.5" y2="358.19999999999993" stroke="#fff" stroke-width="1.8"/>
<polyline points="597.3,358.09999999999997 601.5,354.4 605.7,358.09999999999997" stroke="#222" stroke-width="0.9" fill="none"/>
<polyline points="597.3,362.49999999999994 601.5,358.79999999999995 605.7,362.49999999999994" stroke="#222" stroke-width="0.9" fill="none"/>
<line x1="229.3" y1="478.20000000000005" x2="229.3" y2="481.1" stroke="#fff" stroke-width="1.8"/>
<polyline points="225.10000000000002,478.3 229.3,482 233.5,478.3" stroke="#222" stroke-width="0.9" fill="none"/>
<polyline points="225.10000000000002,473.90000000000003 229.3,477.6 233.5,473.90000000000003" stroke="#222" stroke-width="0.9" fill="none"/>
<line x1="304" y1="478.20000000000005" x2="304" y2="481.1" stroke="#fff" stroke-width="1.8"/>
<polyline points="299.8,478.3 304,482 308.2,478.3" stroke="#222" stroke-width="0.9" fill="none"/>
<polyline points="299.8,473.90000000000003 304,477.6 308.2,473.90000000000003" stroke="#222" stroke-width="0.9" fill="none"/>
<line x1="492.8" y1="482.4" x2="492.8" y2="485.29999999999995" stroke="#fff" stroke-width="1.8"/>
<polyline points="488.6,485.2 492.8,481.5 497.0,485.2" stroke="#222" stroke-width="0.9" fill="none"/>
<polyline points="488.6,489.59999999999997 492.8,485.9 497.0,489.59999999999997" stroke="#222" stroke-width="0.9" fill="none"/>
<line x1="492.8" y1="517.6999999999999" x2="492.8" y2="520.5999999999999" stroke="#fff" stroke-width="1.8"/>
<polyline points="488.6,520.5 492.8,516.8 497.0,520.5" stroke="#222" stroke-width="0.9" fill="none"/>
<polyline points="488.6,524.9 492.8,521.1999999999999 497.0,524.9" stroke="#222" stroke-width="0.9" fill="none"/>
<line x1="553" y1="482.4" x2="553" y2="485.29999999999995" stroke="#fff" stroke-width="1.8"/>
<polyline points="548.8,485.2 553,481.5 557.2,485.2" stroke="#222" stroke-width="0.9" fill="none"/>
<polyline points="548.8,489.59999999999997 553,485.9 557.2,489.59999999999997" stroke="#222" stroke-width="0.9" fill="none"/>
<line x1="553" y1="517.6999999999999" x2="553" y2="520.5999999999999" stroke="#fff" stroke-width="1.8"/>
<polyline points="548.8,520.5 553,516.8 557.2,520.5" stroke="#222" stroke-width="0.9" fill="none"/>
<polyline points="548.8,524.9 553,521.1999999999999 557.2,524.9" stroke="#222" stroke-width="0.9" fill="none"/>
<line x1="594" y1="482.4" x2="594" y2="485.29999999999995" stroke="#fff" stroke-width="1.8"/>
<polyline points="589.8,485.2 594,481.5 598.2,485.2" stroke="#222" stroke-width="0.9" fill="none"/>
<polyline points="589.8,489.59999999999997 594,485.9 598.2,489.59999999999997" stroke="#222" stroke-width="0.9" fill="none"/>
<line x1="594" y1="517.6999999999999" x2="594" y2="520.5999999999999" stroke="#fff" stroke-width="1.8"/>
<polyline points="589.8,520.5 594,516.8 598.2,520.5" stroke="#222" stroke-width="0.9" fill="none"/>
<polyline points="589.8,524.9 594,521.1999999999999 598.2,524.9" stroke="#222" stroke-width="0.9" fill="none"/>
<line x1="653.2" y1="482.4" x2="653.2" y2="485.29999999999995" stroke="#fff" stroke-width="1.8"/>
<polyline points="649.0,485.2 653.2,481.5 657.4000000000001,485.2" stroke="#222" stroke-width="0.9" fill="none"/>
<polyline points="649.0,489.59999999999997 653.2,485.9 657.4000000000001,489.59999999999997" stroke="#222" stroke-width="0.9" fill="none"/>
<line x1="653.2" y1="517.6999999999999" x2="653.2" y2="520.5999999999999" stroke="#fff" stroke-width="1.8"/>
<polyline points="649.0,520.5 653.2,516.8 657.4000000000001,520.5" stroke="#222" stroke-width="0.9" fill="none"/>
<polyline points="649.0,524.9 653.2,521.1999999999999 657.4000000000001,524.9" stroke="#222" stroke-width="0.9" fill="none"/>
<line x1="492.8" y1="553.3" x2="492.8" y2="556.1999999999999" stroke="#fff" stroke-width="1.8"/>
<polyline points="488.6,556.1 492.8,552.4 497.0,556.1" stroke="#222" stroke-width="0.9" fill="none"/>
<polyline points="488.6,560.5 492.8,556.8 497.0,560.5" stroke="#222" stroke-width="0.9" fill="none"/>
<line x1="492.8" y1="615.7" x2="492.8" y2="618.6" stroke="#fff" stroke-width="1.8"/>
<polyline points="488.6,615.8 492.8,619.5 497.0,615.8" stroke="#222" stroke-width="0.9" fill="none"/>
<polyline points="488.6,611.4 492.8,615.1 497.0,611.4" stroke="#222" stroke-width="0.9" fill="none"/>
<line x1="594" y1="553.3" x2="594" y2="556.1999999999999" stroke="#fff" stroke-width="1.8"/>
<polyline points="589.8,556.1 594,552.4 598.2,556.1" stroke="#222" stroke-width="0.9" fill="none"/>
<polyline points="589.8,560.5 594,556.8 598.2,560.5" stroke="#222" stroke-width="0.9" fill="none"/>
<line x1="594" y1="615.7" x2="594" y2="618.6" stroke="#fff" stroke-width="1.8"/>
<polyline points="589.8,615.8 594,619.5 598.2,615.8" stroke="#222" stroke-width="0.9" fill="none"/>
<polyline points="589.8,611.4 594,615.1 598.2,611.4" stroke="#222" stroke-width="0.9" fill="none"/>
</svg>
</body></html>
